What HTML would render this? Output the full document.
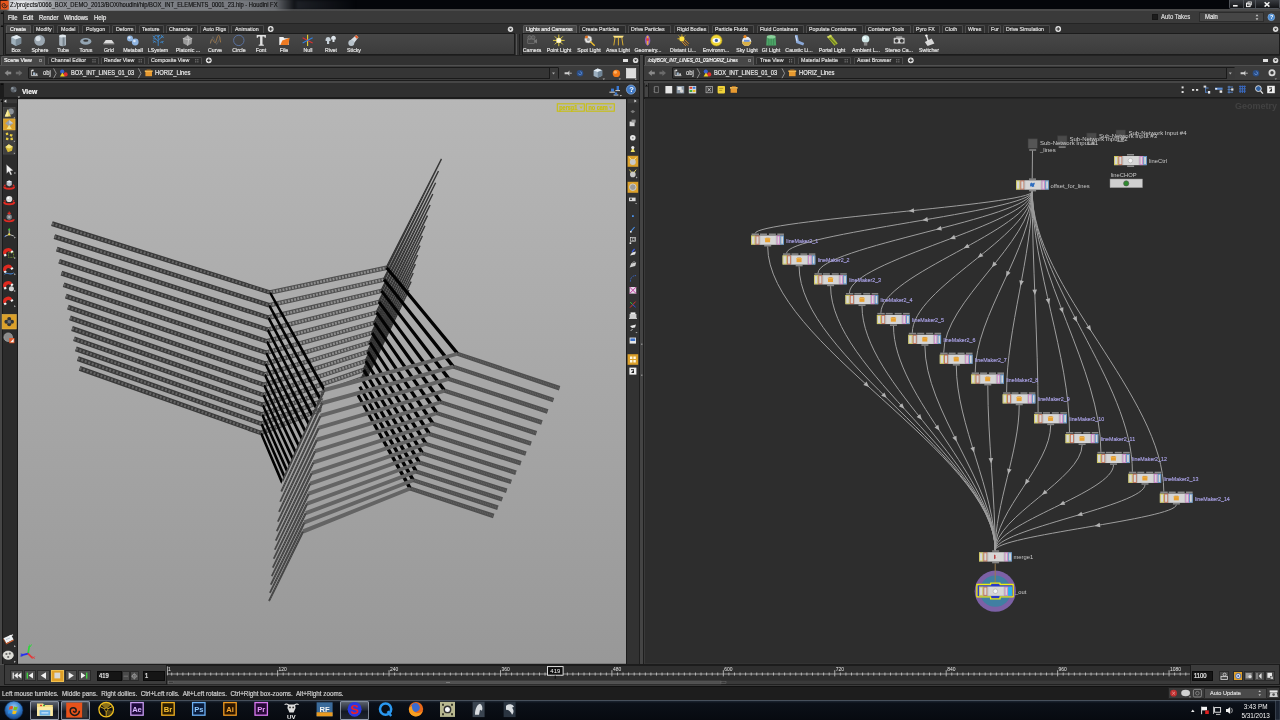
<!DOCTYPE html><html><head><meta charset="utf-8"><title>Houdini FX</title><style>

*{box-sizing:border-box}
html,body{margin:0;padding:0}
body{width:1280px;height:720px;overflow:hidden;background:#3a3a3a;font-family:"Liberation Sans",sans-serif;font-size:6.5px;color:#d0d0d0;position:relative}
.a{position:absolute}
.t{position:absolute;white-space:nowrap;line-height:1}
svg{position:absolute;left:0;top:0;overflow:visible}

</style></head><body><div id="root" style="position:absolute;left:0;top:0;width:1280px;height:720px;will-change:transform;">
<div class="a" style="left:0.0px;top:0.0px;width:1280.0px;height:9.6px;background:#04060a;"></div>
<div class="a" style="left:0.0px;top:9.4px;width:1280.0px;height:1.6px;background:#4a4a4a;"></div>
<div class="a" style="left:8.0px;top:-1.0px;width:290.0px;height:12.0px;background:linear-gradient(90deg,rgba(215,218,222,0.95) 0%,rgba(235,237,240,0.97) 5%,rgba(215,218,222,0.92) 11%,rgba(160,163,168,0.9) 17%,rgba(140,143,148,0.9) 40%,rgba(132,135,140,0.9) 80%,rgba(120,123,128,0.85) 92%,rgba(60,63,68,0.4) 98%,rgba(0,0,0,0) 100%);filter:blur(1.1px);"></div>
<div class="a" style="left:296.0px;top:0.0px;width:60.0px;height:10.0px;background:linear-gradient(90deg,rgba(60,64,72,0.45),rgba(0,0,0,0));filter:blur(1.5px);"></div>
<svg width="1280" height="720"><rect x="0.5" y="0.8" width="8.2" height="8.8" fill="#e8561c"/><path d="M4.6 5.2m-0.8 0a0.8 0.8 0 1 0 1.6 0a1.7 1.7 0 1 0 -3.4 0a2.6 2.6 0 1 0 5.2 0" fill="none" stroke="#1c1c1c" stroke-width="0.8"/></svg>
<div class="t" style="left:10.3px;top:2.01px;font-size:6.3px;color:#0c0c0c;transform:scaleX(0.922);transform-origin:0 0;-webkit-text-stroke:0.22px #0c0c0c;-webkit-text-stroke:0.12px #0c0c0c;">Z:/projects/0066_BOX_DEMO_2013/BOX/houdini/hip/BOX_INT_ELEMENTS_0001_23.hip - Houdini FX</div>
<div class="a" style="left:1229.0px;top:0.0px;width:51.0px;height:9.2px;background:linear-gradient(#3a3d42,#121316);border:0.6px solid #50545a;border-top:none;border-radius:0 0 2px 2px;"></div>
<div class="a" style="left:1242.6px;top:0.0px;width:0.6px;height:9.0px;background:#50545a;"></div><div class="a" style="left:1255.2px;top:0.0px;width:0.6px;height:9.0px;background:#50545a;"></div>
<svg width="1280" height="720"><rect x="1233" y="5" width="4.6" height="1.6" fill="#f0f0f0"/><rect x="1246.5" y="3.2" width="3.6" height="3.4" fill="none" stroke="#f0f0f0" stroke-width="1"/><rect x="1248" y="1.9" width="3.4" height="3" fill="none" stroke="#f0f0f0" stroke-width="0.7"/><path d="M1264.6 2.2L1269.4 6.6M1269.4 2.2L1264.6 6.6" stroke="#f4f4f4" stroke-width="1.5"/></svg>
<div class="a" style="left:0.0px;top:10.8px;width:1280.0px;height:12.8px;background:#3a3a3a;"></div>
<div class="t" style="left:7.6px;top:14.62px;font-size:6.9px;color:#ececec;transform:scaleX(0.860);transform-origin:0 0;-webkit-text-stroke:0.22px #ececec;">File</div>
<div class="t" style="left:23.0px;top:14.62px;font-size:6.9px;color:#ececec;transform:scaleX(0.860);transform-origin:0 0;-webkit-text-stroke:0.22px #ececec;">Edit</div>
<div class="t" style="left:38.8px;top:14.62px;font-size:6.9px;color:#ececec;transform:scaleX(0.860);transform-origin:0 0;-webkit-text-stroke:0.22px #ececec;">Render</div>
<div class="t" style="left:64.2px;top:14.62px;font-size:6.9px;color:#ececec;transform:scaleX(0.860);transform-origin:0 0;-webkit-text-stroke:0.22px #ececec;">Windows</div>
<div class="t" style="left:94.4px;top:14.62px;font-size:6.9px;color:#ececec;transform:scaleX(0.860);transform-origin:0 0;-webkit-text-stroke:0.22px #ececec;">Help</div>
<div class="a" style="left:1152.0px;top:14.2px;width:5.6px;height:5.6px;background:#1c1c1c;border:0.5px solid #161616;"></div>
<div class="t" style="left:1161.0px;top:14.17px;font-size:6.6px;color:#d8d8d8;transform:scaleX(0.900);transform-origin:0 0;-webkit-text-stroke:0.22px #d8d8d8;">Auto Takes</div>
<div class="a" style="left:1199.0px;top:12.2px;width:65.0px;height:10.0px;background:#464646;border:0.5px solid #2c2c2c;"></div>
<div class="t" style="left:1205.0px;top:13.97px;font-size:6.6px;color:#e0e0e0;transform:scaleX(0.900);transform-origin:0 0;-webkit-text-stroke:0.22px #e0e0e0;">Main</div>
<svg width="1280" height="720"><path d="M1255.6 16.2h2.8l-1.4-2zM1255.6 18.2h2.8l-1.4 2z" fill="#c8c8c8"/><circle cx="1271.3" cy="17.2" r="3.4" fill="#4a8ad0"/><circle cx="1271.3" cy="17.2" r="3.4" fill="none" stroke="#9cc4f0" stroke-width="0.5"/><text x="1270" y="19.3" font-size="5.5" font-weight="bold" fill="#fff" font-family="Liberation Sans">?</text></svg>
<div class="a" style="left:0.0px;top:23.4px;width:1280.0px;height:32.2px;background:#303030;border-top:1.4px solid #242424;"></div>
<div class="a" style="left:0.0px;top:10.6px;width:4.4px;height:88.0px;background:#3f3f3f;border-right:0.7px solid #1c1c1c;"></div>
<div class="a" style="left:0.0px;top:98.5px;width:2.4px;height:602.0px;background:#464646;"></div>
<div class="a" style="left:6.0px;top:25.0px;width:24.6px;height:8.8px;background:#474747;border:0.6px solid #5a5a5a;border-bottom:none;border-radius:1.5px 1.5px 0 0;"></div><div class="t" style="left:9.6px;top:26.86px;font-size:5.8px;color:#f4f4f4;transform:scaleX(0.920);transform-origin:0 0;-webkit-text-stroke:0.22px #f4f4f4;">Create</div><div class="a" style="left:32.6px;top:25.4px;width:21.8px;height:7.2px;background:#2d2d2d;border:0.6px solid #4c4c4c;border-bottom:none;border-radius:1.5px 1.5px 0 0;"></div><div class="t" style="left:36.2px;top:26.86px;font-size:5.8px;color:#dedede;transform:scaleX(0.920);transform-origin:0 0;-webkit-text-stroke:0.22px #dedede;">Modify</div><div class="a" style="left:57.4px;top:25.4px;width:22.0px;height:7.2px;background:#2d2d2d;border:0.6px solid #4c4c4c;border-bottom:none;border-radius:1.5px 1.5px 0 0;"></div><div class="t" style="left:61.0px;top:26.86px;font-size:5.8px;color:#dedede;transform:scaleX(0.920);transform-origin:0 0;-webkit-text-stroke:0.22px #dedede;">Model</div><div class="a" style="left:82.4px;top:25.4px;width:27.6px;height:7.2px;background:#2d2d2d;border:0.6px solid #4c4c4c;border-bottom:none;border-radius:1.5px 1.5px 0 0;"></div><div class="t" style="left:86.0px;top:26.86px;font-size:5.8px;color:#dedede;transform:scaleX(0.920);transform-origin:0 0;-webkit-text-stroke:0.22px #dedede;">Polygon</div><div class="a" style="left:112.0px;top:25.4px;width:24.2px;height:7.2px;background:#2d2d2d;border:0.6px solid #4c4c4c;border-bottom:none;border-radius:1.5px 1.5px 0 0;"></div><div class="t" style="left:115.6px;top:26.86px;font-size:5.8px;color:#dedede;transform:scaleX(0.920);transform-origin:0 0;-webkit-text-stroke:0.22px #dedede;">Deform</div><div class="a" style="left:138.6px;top:25.4px;width:25.0px;height:7.2px;background:#2d2d2d;border:0.6px solid #4c4c4c;border-bottom:none;border-radius:1.5px 1.5px 0 0;"></div><div class="t" style="left:142.2px;top:26.86px;font-size:5.8px;color:#dedede;transform:scaleX(0.920);transform-origin:0 0;-webkit-text-stroke:0.22px #dedede;">Texture</div><div class="a" style="left:165.6px;top:25.4px;width:32.0px;height:7.2px;background:#2d2d2d;border:0.6px solid #4c4c4c;border-bottom:none;border-radius:1.5px 1.5px 0 0;"></div><div class="t" style="left:169.2px;top:26.86px;font-size:5.8px;color:#dedede;transform:scaleX(0.920);transform-origin:0 0;-webkit-text-stroke:0.22px #dedede;">Character</div><div class="a" style="left:199.8px;top:25.4px;width:29.2px;height:7.2px;background:#2d2d2d;border:0.6px solid #4c4c4c;border-bottom:none;border-radius:1.5px 1.5px 0 0;"></div><div class="t" style="left:203.4px;top:26.86px;font-size:5.8px;color:#dedede;transform:scaleX(0.920);transform-origin:0 0;-webkit-text-stroke:0.22px #dedede;">Auto Rigs</div><div class="a" style="left:231.2px;top:25.4px;width:32.8px;height:7.2px;background:#2d2d2d;border:0.6px solid #4c4c4c;border-bottom:none;border-radius:1.5px 1.5px 0 0;"></div><div class="t" style="left:234.8px;top:26.86px;font-size:5.8px;color:#dedede;transform:scaleX(0.920);transform-origin:0 0;-webkit-text-stroke:0.22px #dedede;">Animation</div>
<svg width="1280" height="720"><circle cx="270.7" cy="29.0" r="2.9" fill="#e4e4e4"/><path d="M268.9 29.0h3.6M270.7 27.2v3.6" stroke="#2a2a2a" stroke-width="1"/></svg>
<svg width="1280" height="720"><circle cx="510.5" cy="29.2" r="2.7" fill="#d8d8d8"/><path d="M509.0 28.4h3l-1.5 2z" fill="#2a2a2a"/></svg>
<div class="a" style="left:522.6px;top:25.0px;width:54.4px;height:8.8px;background:#474747;border:0.6px solid #5a5a5a;border-bottom:none;border-radius:1.5px 1.5px 0 0;"></div><div class="t" style="left:525.8px;top:26.86px;font-size:5.8px;color:#f4f4f4;transform:scaleX(0.900);transform-origin:0 0;-webkit-text-stroke:0.22px #f4f4f4;">Lights and Cameras</div><div class="a" style="left:579.0px;top:25.4px;width:47.0px;height:7.2px;background:#2d2d2d;border:0.6px solid #4c4c4c;border-bottom:none;border-radius:1.5px 1.5px 0 0;"></div><div class="t" style="left:582.2px;top:26.86px;font-size:5.8px;color:#dedede;transform:scaleX(0.900);transform-origin:0 0;-webkit-text-stroke:0.22px #dedede;">Create Particles</div><div class="a" style="left:628.0px;top:25.4px;width:43.0px;height:7.2px;background:#2d2d2d;border:0.6px solid #4c4c4c;border-bottom:none;border-radius:1.5px 1.5px 0 0;"></div><div class="t" style="left:631.2px;top:26.86px;font-size:5.8px;color:#dedede;transform:scaleX(0.900);transform-origin:0 0;-webkit-text-stroke:0.22px #dedede;">Drive Particles</div><div class="a" style="left:673.6px;top:25.4px;width:35.0px;height:7.2px;background:#2d2d2d;border:0.6px solid #4c4c4c;border-bottom:none;border-radius:1.5px 1.5px 0 0;"></div><div class="t" style="left:676.8px;top:26.86px;font-size:5.8px;color:#dedede;transform:scaleX(0.900);transform-origin:0 0;-webkit-text-stroke:0.22px #dedede;">Rigid Bodies</div><div class="a" style="left:711.6px;top:25.4px;width:42.8px;height:7.2px;background:#2d2d2d;border:0.6px solid #4c4c4c;border-bottom:none;border-radius:1.5px 1.5px 0 0;"></div><div class="t" style="left:714.8px;top:26.86px;font-size:5.8px;color:#dedede;transform:scaleX(0.900);transform-origin:0 0;-webkit-text-stroke:0.22px #dedede;">Particle Fluids</div><div class="a" style="left:757.0px;top:25.4px;width:46.6px;height:7.2px;background:#2d2d2d;border:0.6px solid #4c4c4c;border-bottom:none;border-radius:1.5px 1.5px 0 0;"></div><div class="t" style="left:760.2px;top:26.86px;font-size:5.8px;color:#dedede;transform:scaleX(0.900);transform-origin:0 0;-webkit-text-stroke:0.22px #dedede;">Fluid Containers</div><div class="a" style="left:806.0px;top:25.4px;width:56.6px;height:7.2px;background:#2d2d2d;border:0.6px solid #4c4c4c;border-bottom:none;border-radius:1.5px 1.5px 0 0;"></div><div class="t" style="left:809.2px;top:26.86px;font-size:5.8px;color:#dedede;transform:scaleX(0.900);transform-origin:0 0;-webkit-text-stroke:0.22px #dedede;">Populate Containers</div><div class="a" style="left:865.0px;top:25.4px;width:45.6px;height:7.2px;background:#2d2d2d;border:0.6px solid #4c4c4c;border-bottom:none;border-radius:1.5px 1.5px 0 0;"></div><div class="t" style="left:868.2px;top:26.86px;font-size:5.8px;color:#dedede;transform:scaleX(0.900);transform-origin:0 0;-webkit-text-stroke:0.22px #dedede;">Container Tools</div><div class="a" style="left:913.0px;top:25.4px;width:26.6px;height:7.2px;background:#2d2d2d;border:0.6px solid #4c4c4c;border-bottom:none;border-radius:1.5px 1.5px 0 0;"></div><div class="t" style="left:916.2px;top:26.86px;font-size:5.8px;color:#dedede;transform:scaleX(0.900);transform-origin:0 0;-webkit-text-stroke:0.22px #dedede;">Pyro FX</div><div class="a" style="left:942.0px;top:25.4px;width:20.6px;height:7.2px;background:#2d2d2d;border:0.6px solid #4c4c4c;border-bottom:none;border-radius:1.5px 1.5px 0 0;"></div><div class="t" style="left:945.2px;top:26.86px;font-size:5.8px;color:#dedede;transform:scaleX(0.900);transform-origin:0 0;-webkit-text-stroke:0.22px #dedede;">Cloth</div><div class="a" style="left:965.0px;top:25.4px;width:19.6px;height:7.2px;background:#2d2d2d;border:0.6px solid #4c4c4c;border-bottom:none;border-radius:1.5px 1.5px 0 0;"></div><div class="t" style="left:968.2px;top:26.86px;font-size:5.8px;color:#dedede;transform:scaleX(0.900);transform-origin:0 0;-webkit-text-stroke:0.22px #dedede;">Wires</div><div class="a" style="left:987.6px;top:25.4px;width:13.0px;height:7.2px;background:#2d2d2d;border:0.6px solid #4c4c4c;border-bottom:none;border-radius:1.5px 1.5px 0 0;"></div><div class="t" style="left:990.8px;top:26.86px;font-size:5.8px;color:#dedede;transform:scaleX(0.900);transform-origin:0 0;-webkit-text-stroke:0.22px #dedede;">Fur</div><div class="a" style="left:1003.0px;top:25.4px;width:47.4px;height:7.2px;background:#2d2d2d;border:0.6px solid #4c4c4c;border-bottom:none;border-radius:1.5px 1.5px 0 0;"></div><div class="t" style="left:1006.2px;top:26.86px;font-size:5.8px;color:#dedede;transform:scaleX(0.900);transform-origin:0 0;-webkit-text-stroke:0.22px #dedede;">Drive Simulation</div>
<svg width="1280" height="720"><circle cx="1058.2" cy="29.0" r="2.9" fill="#e4e4e4"/><path d="M1056.4 29.0h3.6M1058.2 27.2v3.6" stroke="#2a2a2a" stroke-width="1"/></svg>
<svg width="1280" height="720"><circle cx="1275.6" cy="29.2" r="2.7" fill="#d8d8d8"/><path d="M1274.1 28.4h3l-1.5 2z" fill="#2a2a2a"/></svg>
<div class="a" style="left:5.0px;top:33.0px;width:509.6px;height:22.0px;background:linear-gradient(#474747,#3c3c3c);border:0.5px solid #1c1c1c;"></div>
<div class="a" style="left:521.6px;top:33.0px;width:758.4px;height:22.0px;background:linear-gradient(#474747,#3c3c3c);border:0.5px solid #1c1c1c;"></div>
<div class="a" style="left:515.6px;top:33.6px;width:4.6px;height:21.0px;background:#333;border-left:0.6px solid #555;border-right:0.6px solid #1e1e1e;"></div>
<svg width="1280" height="720">
<g transform="translate(16.2 40.4)"><path d="M-5 -3.5L0.5 -5.5L5 -3L5 3L-0.5 5.5L-5 3Z" fill="#9fb0bb"/><path d="M-5 -3.5L-0.5 -1L5 -3L0.5 -5.5Z" fill="#dfe8ee"/><path d="M-0.5 -1V5.5L5 3V-3Z" fill="#7a8a96"/></g>
<g transform="translate(39.6 40.4)"><circle r="5.4" fill="#9aa6b0"/><circle cx="-1.5" cy="-1.8" r="2.6" fill="#d6dee4"/></g>
<g transform="translate(62.6 40.4)"><path d="M-3.4 -4.5V4.2A3.4 1.6 0 0 0 3.4 4.2V-4.5Z" fill="#a9b5be"/><ellipse cy="-4.5" rx="3.4" ry="1.5" fill="#dde5ea"/><path d="M1 -3V5.6" stroke="#7b8790" stroke-width="2"/></g>
<g transform="translate(85.8 40.4)"><ellipse cy="1" rx="5.6" ry="3.3" fill="#93a4b2"/><ellipse cy="0.3" rx="2.6" ry="1.1" fill="#3a3a3a"/></g>
<g transform="translate(108.8 40.4)"><path d="M-5.5 3L-3 -0.5H3L5.5 3Z" fill="#dcdcdc"/><path d="M-5.5 3h11v1h-11z" fill="#999"/></g>
<g transform="translate(132.6 40.4)"><circle cx="-2.6" cy="-2" r="3" fill="#8fb4e0"/><circle cx="2.6" cy="1.6" r="3.4" fill="#8fb4e0"/><circle cx="-3.3" cy="-2.8" r="1.2" fill="#dce9f8"/><circle cx="1.8" cy="0.6" r="1.3" fill="#dce9f8"/></g>
<g transform="translate(158.2 40.4)"><path d="M0 5.5V-1M0 1L-4 -3M0 0L4 -4M0 -1V-5.5M-4 -3L-5.4 -4.6M-4 -3L-2.6 -5.2M4 -4L5.4 -2.4M4 -4L3 -5.6M-2 2L-5.4 0.2M2 2L5.4 1M-2.4 -1.4L-5 -1.6M2.6 -2.6L5.2 -4.6M0 -3.4L-1.8 -5.4M0 -3.4L1.6 -5.4M-3.6 1L-4.8 2.4M3.6 1.4L4.8 3" stroke="#3f8fd8" stroke-width="0.85" fill="none"/></g>
<g transform="translate(187.6 40.4)"><path d="M0 -5.2L4.6 -2.2L4 3.4L0 5.4L-4.2 3.2L-4.8 -2Z" fill="#9a9a9a"/><path d="M0 -5.2L1 -0.5L4.6 -2.2M1 -0.5L0 5.4M1 -0.5L-4.8 -2" stroke="#d8d8d8" stroke-width="0.6" fill="none"/></g>
<g transform="translate(215.4 40.4)"><path d="M-5 3C-3 -8 -1 8 1 0S4 -6 5.2 2" stroke="#a07848" stroke-width="1" fill="none"/><path d="M-5 3L-2.4 -3.8L1.2 4L5.2 -3" stroke="#777" stroke-width="0.5" fill="none"/></g>
<g transform="translate(238.8 40.4)"><circle r="5.2" fill="none" stroke="#5a72a0" stroke-width="1"/></g>
<g transform="translate(261.3 40.4)"><path d="M-4.6 -5.4H4.6V-2.6H3.4L3 -4H1.2V4L2.6 4.4V5.4H-2.6V4.4L-1.2 4V-4H-3L-3.4 -2.6H-4.6Z" fill="#e2e2e2"/></g>
<g transform="translate(284.3 40.4)"><path d="M-5 -3.5H-1L0 -2.2H4.4V4.5H-5Z" fill="#f2f2f2"/><path d="M-2 0L5.4 -2.6L4 4.5H-4Z" fill="#ee7a22"/></g>
<g transform="translate(307.6 40.4)"><path d="M0 -5.6V5.6" stroke="#e8d030" stroke-width="1.1"/><path d="M-5 -2.6L5 2.6" stroke="#e03030" stroke-width="1.1"/><path d="M-5 2.6L5 -2.6" stroke="#3080e0" stroke-width="1.1"/></g>
<g transform="translate(330.6 40.4)"><path d="M-5 -1.5A2.6 2.6 0 0 1 0 -1.5V0.5H-1.4V3.6H-3.6V0.5H-5Z" fill="#c6d0d8"/><path d="M0.6 -3A2.4 2.4 0 0 1 5.2 -3V-1H3.9V1.6H1.9V-1H0.6Z" fill="#dfe6ec"/></g>
<g transform="translate(353.7 40.4)"><path d="M-4.8 1L2.6 -5.4L4.8 -3.2L-1.2 4.6Z" fill="#d6dce2"/><circle cx="-2.4" cy="2.6" r="3" fill="#b8c2ca"/><path d="M2.6 -5.4L4.8 -3.2L3 -1.6L1 -3.8Z" fill="#e06030"/></g>
<g transform="translate(532.0 40.4)"><rect x="-4.2" y="-1.4" width="6.6" height="4.4" fill="#4a4a4a" stroke="#888" stroke-width="0.5"/><circle cx="-2.4" cy="-3" r="1.8" fill="#555" stroke="#8a8a8a" stroke-width="0.5"/><circle cx="1.2" cy="-3" r="1.8" fill="#555" stroke="#8a8a8a" stroke-width="0.5"/><path d="M2.4 0.2L5 -1.4V3L2.4 1.6Z" fill="#777"/></g>
<g transform="translate(558.8 40.4)"><circle r="2.6" fill="#fff6b0"/><path d="M0 -5.8V5.8M-5.8 0H5.8M-4 -4L4 4M-4 4L4 -4" stroke="#f0d840" stroke-width="0.9"/><circle r="2.2" fill="#fffbe0"/></g>
<g transform="translate(589.3 40.4)"><circle cx="-1" cy="-1" r="3.6" fill="#e6e6e6" stroke="#888" stroke-width="0.6"/><path d="M1 1L5.4 5.4" stroke="#f0c030" stroke-width="1.4"/><circle cx="-2.8" cy="-3.4" r="1.5" fill="#e07020"/><circle cx="-1" cy="-1" r="1.6" fill="#9a9a9a"/></g>
<g transform="translate(618.4 40.4)"><path d="M-5.4 -4.6H5.4L4.2 -2.6H-4.2Z" fill="#ffe680"/><path d="M-3.4 -2.6L-4.6 5M0 -2.6V5M3.4 -2.6L4.6 5" stroke="#e8b830" stroke-width="0.9"/></g>
<g transform="translate(647.6 40.4)"><path d="M0 -5.6C3.6 -3 3.6 3 0 5.6C-3.6 3 -3.6 -3 0 -5.6Z" fill="#8a5ac0"/><path d="M0 -4.4V4.4" stroke="#f0b030" stroke-width="1.6"/><circle cx="0" cy="-1" r="1.5" fill="#e04040"/></g>
<g transform="translate(683.3 40.4)"><circle cx="-1.4" cy="-1.6" r="2.6" fill="#ffe040"/><path d="M-1.4 -6V-4.6M-5.8 -1.6H-4.4M-4.6 -4.8L-3.6 -3.8M1.8 -4.8L0.8 -3.8" stroke="#f0c020" stroke-width="0.9"/><path d="M0 0.6L4.6 5.2M1.6 -0.6L5.6 3.4M-1.4 1.4L2.6 5.6" stroke="#e09020" stroke-width="0.9"/></g>
<g transform="translate(716.4 40.4)"><circle r="5.6" fill="#f0d838"/><circle r="5.6" fill="none" stroke="#b89a18" stroke-width="0.6"/><ellipse rx="3.8" ry="2.3" fill="#fafafa"/><circle r="1.6" fill="#3a62b0"/></g>
<g transform="translate(746.6 40.4)"><circle cy="1" r="4.6" fill="#e8ecf2"/><path d="M-4.6 1A4.6 4.6 0 0 0 4.6 1Z" fill="#d8b048"/><circle cx="-1.6" cy="-3.8" r="1.6" fill="#f08a20"/><path d="M-2.6 -0.6H3V1.4H-2.6Z" fill="#6a90d8"/></g>
<g transform="translate(771.2 40.4)"><path d="M-4.4 -3.6L-5 5H5L4.4 -3.6Z" fill="#4ea468"/><path d="M-2.4 -2v7.2M0 -2v7.4M2.4 -2v7.2" stroke="#3a8852" stroke-width="0.8"/><ellipse cy="-3.6" rx="4.4" ry="1.8" fill="#8ad09a"/></g>
<g transform="translate(799.2 40.4)"><path d="M-4.2 -5.4L-1.6 -5.4L-0.4 0.4L5 2.6L4 5L-3 2.6Z" fill="#8aa8d8"/><path d="M-3.6 -4.6L-2.2 0.8" stroke="#e4ecf8" stroke-width="0.9"/></g>
<g transform="translate(832.4 40.4)"><path d="M-5.4 -3.6L-1.6 -5.6L5.4 3L2 5.4Z" fill="#a4b434"/><path d="M-3.6 -3.2L3.6 4.2" stroke="#66781c" stroke-width="1.2"/><path d="M-5.4 -3.6L-1.6 -5.6L-0.4 -4.2L-4.2 -2.2Z" fill="#d4d860"/></g>
<g transform="translate(865.6 40.4)"><circle cy="-1.4" r="3.8" fill="#cfe6e6"/><path d="M-1.7 2H1.7V5.2H-1.7Z" fill="#8a8a8a"/><circle cx="-1" cy="-2.4" r="1.4" fill="#f4ffff"/></g>
<g transform="translate(899.2 40.4)"><rect x="-5.6" y="-2.6" width="11.2" height="6" rx="0.8" fill="#d8d8d8" stroke="#555" stroke-width="0.5"/><circle cx="-2.6" cy="0.4" r="1.9" fill="#3a3a3a"/><circle cx="2.6" cy="0.4" r="1.9" fill="#3a3a3a"/><path d="M-3 -4H3V-2.6H-3Z" fill="#aaa"/></g>
<g transform="translate(929.4 40.4)"><path d="M-4.6 1.6L2.2 -1.8L5 3L-1.8 5.6Z" fill="#d8d8d8"/><path d="M-1 1.4L-3 -4.8" stroke="#e8e8e8" stroke-width="1.4"/><circle cx="-3" cy="-4.8" r="1.2" fill="#f4f4f4"/></g>
</svg>
<div class="t" style="left:16.2px;top:47.56px;width:50px;margin-left:-25px;text-align:center;font-size:5.8px;color:#e2e2e2;transform:scaleX(0.9);-webkit-text-stroke:0.22px #e2e2e2;">Box</div>
<div class="t" style="left:39.6px;top:47.56px;width:50px;margin-left:-25px;text-align:center;font-size:5.8px;color:#e2e2e2;transform:scaleX(0.9);-webkit-text-stroke:0.22px #e2e2e2;">Sphere</div>
<div class="t" style="left:62.6px;top:47.56px;width:50px;margin-left:-25px;text-align:center;font-size:5.8px;color:#e2e2e2;transform:scaleX(0.9);-webkit-text-stroke:0.22px #e2e2e2;">Tube</div>
<div class="t" style="left:85.8px;top:47.56px;width:50px;margin-left:-25px;text-align:center;font-size:5.8px;color:#e2e2e2;transform:scaleX(0.9);-webkit-text-stroke:0.22px #e2e2e2;">Torus</div>
<div class="t" style="left:108.8px;top:47.56px;width:50px;margin-left:-25px;text-align:center;font-size:5.8px;color:#e2e2e2;transform:scaleX(0.9);-webkit-text-stroke:0.22px #e2e2e2;">Grid</div>
<div class="t" style="left:132.6px;top:47.56px;width:50px;margin-left:-25px;text-align:center;font-size:5.8px;color:#e2e2e2;transform:scaleX(0.9);-webkit-text-stroke:0.22px #e2e2e2;">Metaball</div>
<div class="t" style="left:158.2px;top:47.56px;width:50px;margin-left:-25px;text-align:center;font-size:5.8px;color:#e2e2e2;transform:scaleX(0.9);-webkit-text-stroke:0.22px #e2e2e2;">LSystem</div>
<div class="t" style="left:187.6px;top:47.56px;width:50px;margin-left:-25px;text-align:center;font-size:5.8px;color:#e2e2e2;transform:scaleX(0.9);-webkit-text-stroke:0.22px #e2e2e2;">Platonic ...</div>
<div class="t" style="left:215.4px;top:47.56px;width:50px;margin-left:-25px;text-align:center;font-size:5.8px;color:#e2e2e2;transform:scaleX(0.9);-webkit-text-stroke:0.22px #e2e2e2;">Curve</div>
<div class="t" style="left:238.8px;top:47.56px;width:50px;margin-left:-25px;text-align:center;font-size:5.8px;color:#e2e2e2;transform:scaleX(0.9);-webkit-text-stroke:0.22px #e2e2e2;">Circle</div>
<div class="t" style="left:261.3px;top:47.56px;width:50px;margin-left:-25px;text-align:center;font-size:5.8px;color:#e2e2e2;transform:scaleX(0.9);-webkit-text-stroke:0.22px #e2e2e2;">Font</div>
<div class="t" style="left:284.3px;top:47.56px;width:50px;margin-left:-25px;text-align:center;font-size:5.8px;color:#e2e2e2;transform:scaleX(0.9);-webkit-text-stroke:0.22px #e2e2e2;">File</div>
<div class="t" style="left:307.6px;top:47.56px;width:50px;margin-left:-25px;text-align:center;font-size:5.8px;color:#e2e2e2;transform:scaleX(0.9);-webkit-text-stroke:0.22px #e2e2e2;">Null</div>
<div class="t" style="left:330.6px;top:47.56px;width:50px;margin-left:-25px;text-align:center;font-size:5.8px;color:#e2e2e2;transform:scaleX(0.9);-webkit-text-stroke:0.22px #e2e2e2;">Rivet</div>
<div class="t" style="left:353.7px;top:47.56px;width:50px;margin-left:-25px;text-align:center;font-size:5.8px;color:#e2e2e2;transform:scaleX(0.9);-webkit-text-stroke:0.22px #e2e2e2;">Sticky</div>
<div class="t" style="left:532.0px;top:47.56px;width:50px;margin-left:-25px;text-align:center;font-size:5.8px;color:#e2e2e2;transform:scaleX(0.9);-webkit-text-stroke:0.22px #e2e2e2;">Camera</div>
<div class="t" style="left:558.8px;top:47.56px;width:50px;margin-left:-25px;text-align:center;font-size:5.8px;color:#e2e2e2;transform:scaleX(0.9);-webkit-text-stroke:0.22px #e2e2e2;">Point Light</div>
<div class="t" style="left:589.3px;top:47.56px;width:50px;margin-left:-25px;text-align:center;font-size:5.8px;color:#e2e2e2;transform:scaleX(0.9);-webkit-text-stroke:0.22px #e2e2e2;">Spot Light</div>
<div class="t" style="left:618.4px;top:47.56px;width:50px;margin-left:-25px;text-align:center;font-size:5.8px;color:#e2e2e2;transform:scaleX(0.9);-webkit-text-stroke:0.22px #e2e2e2;">Area Light</div>
<div class="t" style="left:647.6px;top:47.56px;width:50px;margin-left:-25px;text-align:center;font-size:5.8px;color:#e2e2e2;transform:scaleX(0.9);-webkit-text-stroke:0.22px #e2e2e2;">Geometry...</div>
<div class="t" style="left:683.3px;top:47.56px;width:50px;margin-left:-25px;text-align:center;font-size:5.8px;color:#e2e2e2;transform:scaleX(0.9);-webkit-text-stroke:0.22px #e2e2e2;">Distant Li...</div>
<div class="t" style="left:716.4px;top:47.56px;width:50px;margin-left:-25px;text-align:center;font-size:5.8px;color:#e2e2e2;transform:scaleX(0.9);-webkit-text-stroke:0.22px #e2e2e2;">Environm...</div>
<div class="t" style="left:746.6px;top:47.56px;width:50px;margin-left:-25px;text-align:center;font-size:5.8px;color:#e2e2e2;transform:scaleX(0.9);-webkit-text-stroke:0.22px #e2e2e2;">Sky Light</div>
<div class="t" style="left:771.2px;top:47.56px;width:50px;margin-left:-25px;text-align:center;font-size:5.8px;color:#e2e2e2;transform:scaleX(0.9);-webkit-text-stroke:0.22px #e2e2e2;">GI Light</div>
<div class="t" style="left:799.2px;top:47.56px;width:50px;margin-left:-25px;text-align:center;font-size:5.8px;color:#e2e2e2;transform:scaleX(0.9);-webkit-text-stroke:0.22px #e2e2e2;">Caustic Li...</div>
<div class="t" style="left:832.4px;top:47.56px;width:50px;margin-left:-25px;text-align:center;font-size:5.8px;color:#e2e2e2;transform:scaleX(0.9);-webkit-text-stroke:0.22px #e2e2e2;">Portal Light</div>
<div class="t" style="left:865.6px;top:47.56px;width:50px;margin-left:-25px;text-align:center;font-size:5.8px;color:#e2e2e2;transform:scaleX(0.9);-webkit-text-stroke:0.22px #e2e2e2;">Ambient L...</div>
<div class="t" style="left:899.2px;top:47.56px;width:50px;margin-left:-25px;text-align:center;font-size:5.8px;color:#e2e2e2;transform:scaleX(0.9);-webkit-text-stroke:0.22px #e2e2e2;">Stereo Ca...</div>
<div class="t" style="left:929.4px;top:47.56px;width:50px;margin-left:-25px;text-align:center;font-size:5.8px;color:#e2e2e2;transform:scaleX(0.9);-webkit-text-stroke:0.22px #e2e2e2;">Switcher</div>
<div class="a" style="left:0.0px;top:55.4px;width:1280.0px;height:9.6px;background:#313131;border-top:1px solid #222;"></div>
<div class="a" style="left:1.0px;top:56.2px;width:44.4px;height:9.4px;background:#474747;border:0.6px solid #5a5a5a;border-bottom:none;border-radius:1.5px 1.5px 0 0;"></div><div class="t" style="left:4.4px;top:57.51px;font-size:5.9px;color:#f4f4f4;transform:scaleX(0.900);transform-origin:0 0;-webkit-text-stroke:0.22px #f4f4f4;">Scene View</div><div class="a" style="left:39.0px;top:59.1px;width:3.4px;height:3.2px;border:0.6px solid #8a8a8a;"></div><div class="a" style="left:47.6px;top:56.6px;width:51.2px;height:7.8px;background:#2d2d2d;border:0.6px solid #4c4c4c;border-bottom:none;border-radius:1.5px 1.5px 0 0;"></div><div class="t" style="left:51.0px;top:57.51px;font-size:5.9px;color:#dedede;transform:scaleX(0.900);transform-origin:0 0;-webkit-text-stroke:0.22px #dedede;">Channel Editor</div><svg width="1280" height="720"><g fill="#8a8a8a"><rect x="92.4" y="59.2" width="1.1" height="1.1"/><rect x="94.5" y="59.2" width="1.1" height="1.1"/><rect x="92.4" y="61.3" width="1.1" height="1.1"/><rect x="94.5" y="61.3" width="1.1" height="1.1"/></g></svg><div class="a" style="left:101.0px;top:56.6px;width:44.0px;height:7.8px;background:#2d2d2d;border:0.6px solid #4c4c4c;border-bottom:none;border-radius:1.5px 1.5px 0 0;"></div><div class="t" style="left:104.4px;top:57.51px;font-size:5.9px;color:#dedede;transform:scaleX(0.900);transform-origin:0 0;-webkit-text-stroke:0.22px #dedede;">Render View</div><svg width="1280" height="720"><g fill="#8a8a8a"><rect x="138.6" y="59.2" width="1.1" height="1.1"/><rect x="140.7" y="59.2" width="1.1" height="1.1"/><rect x="138.6" y="61.3" width="1.1" height="1.1"/><rect x="140.7" y="61.3" width="1.1" height="1.1"/></g></svg><div class="a" style="left:147.6px;top:56.6px;width:54.0px;height:7.8px;background:#2d2d2d;border:0.6px solid #4c4c4c;border-bottom:none;border-radius:1.5px 1.5px 0 0;"></div><div class="t" style="left:151.0px;top:57.51px;font-size:5.9px;color:#dedede;transform:scaleX(0.900);transform-origin:0 0;-webkit-text-stroke:0.22px #dedede;">Composite View</div><svg width="1280" height="720"><g fill="#8a8a8a"><rect x="195.2" y="59.2" width="1.1" height="1.1"/><rect x="197.3" y="59.2" width="1.1" height="1.1"/><rect x="195.2" y="61.3" width="1.1" height="1.1"/><rect x="197.3" y="61.3" width="1.1" height="1.1"/></g></svg>
<svg width="1280" height="720"><circle cx="208.8" cy="60.3" r="2.9" fill="#e4e4e4"/><path d="M207.0 60.3h3.6M208.8 58.5v3.6" stroke="#2a2a2a" stroke-width="1"/></svg>
<div class="a" style="left:645.0px;top:56.2px;width:109.0px;height:9.4px;background:#474747;border:0.6px solid #5a5a5a;border-bottom:none;border-radius:1.5px 1.5px 0 0;"></div><div class="t" style="left:648.4px;top:57.51px;font-size:5.9px;color:#f4f4f4;transform:scaleX(0.790);transform-origin:0 0;-webkit-text-stroke:0.22px #f4f4f4;font-style:italic;">/obj/BOX_INT_LINES_01_03/HORIZ_Lines</div><div class="a" style="left:747.6px;top:59.1px;width:3.4px;height:3.2px;border:0.6px solid #8a8a8a;"></div><div class="a" style="left:756.4px;top:56.6px;width:39.0px;height:7.8px;background:#2d2d2d;border:0.6px solid #4c4c4c;border-bottom:none;border-radius:1.5px 1.5px 0 0;"></div><div class="t" style="left:759.8px;top:57.51px;font-size:5.9px;color:#dedede;transform:scaleX(0.900);transform-origin:0 0;-webkit-text-stroke:0.22px #dedede;">Tree View</div><svg width="1280" height="720"><g fill="#8a8a8a"><rect x="789.0" y="59.2" width="1.1" height="1.1"/><rect x="791.1" y="59.2" width="1.1" height="1.1"/><rect x="789.0" y="61.3" width="1.1" height="1.1"/><rect x="791.1" y="61.3" width="1.1" height="1.1"/></g></svg><div class="a" style="left:797.6px;top:56.6px;width:53.4px;height:7.8px;background:#2d2d2d;border:0.6px solid #4c4c4c;border-bottom:none;border-radius:1.5px 1.5px 0 0;"></div><div class="t" style="left:801.0px;top:57.51px;font-size:5.9px;color:#dedede;transform:scaleX(0.900);transform-origin:0 0;-webkit-text-stroke:0.22px #dedede;">Material Palette</div><svg width="1280" height="720"><g fill="#8a8a8a"><rect x="844.6" y="59.2" width="1.1" height="1.1"/><rect x="846.7" y="59.2" width="1.1" height="1.1"/><rect x="844.6" y="61.3" width="1.1" height="1.1"/><rect x="846.7" y="61.3" width="1.1" height="1.1"/></g></svg><div class="a" style="left:853.6px;top:56.6px;width:49.0px;height:7.8px;background:#2d2d2d;border:0.6px solid #4c4c4c;border-bottom:none;border-radius:1.5px 1.5px 0 0;"></div><div class="t" style="left:857.0px;top:57.51px;font-size:5.9px;color:#dedede;transform:scaleX(0.900);transform-origin:0 0;-webkit-text-stroke:0.22px #dedede;">Asset Browser</div><svg width="1280" height="720"><g fill="#8a8a8a"><rect x="896.2" y="59.2" width="1.1" height="1.1"/><rect x="898.3" y="59.2" width="1.1" height="1.1"/><rect x="896.2" y="61.3" width="1.1" height="1.1"/><rect x="898.3" y="61.3" width="1.1" height="1.1"/></g></svg>
<svg width="1280" height="720"><circle cx="910.8" cy="60.3" r="2.9" fill="#e4e4e4"/><path d="M909.0 60.3h3.6M910.8 58.5v3.6" stroke="#2a2a2a" stroke-width="1"/></svg>
<div class="a" style="left:623.0px;top:58.6px;width:5.0px;height:3.6px;background:#e0e0e0;"></div>
<svg width="1280" height="720"><circle cx="635.6" cy="60.4" r="2.7" fill="#d8d8d8"/><path d="M634.1 59.6h3l-1.5 2z" fill="#2a2a2a"/></svg>
<div class="a" style="left:1263.0px;top:58.6px;width:5.0px;height:3.6px;background:#e0e0e0;"></div>
<svg width="1280" height="720"><circle cx="1275.6" cy="60.4" r="2.7" fill="#d8d8d8"/><path d="M1274.1 59.6h3l-1.5 2z" fill="#2a2a2a"/></svg>
<div class="a" style="left:0.0px;top:65.0px;width:1280.0px;height:16.4px;background:#3c3c3c;border-top:0.6px solid #505050;"></div>
<div class="a" style="left:28.0px;top:67.4px;width:530.6px;height:11.8px;background:#353535;border:0.6px solid #1a1a1a;border-radius:1px;"></div>
<div class="a" style="left:549.0px;top:68.0px;width:9.0px;height:10.6px;background:#3a3a3a;border-left:0.6px solid #1a1a1a;"></div>
<svg width="1280" height="720"><path d="M552.0 72.4h3l-1.5 2.2z" fill="#a8a8a8"/></svg>
<div class="a" style="left:672.0px;top:67.4px;width:563.4px;height:11.8px;background:#353535;border:0.6px solid #1a1a1a;border-radius:1px;"></div>
<div class="a" style="left:1225.8px;top:68.0px;width:9.0px;height:10.6px;background:#3a3a3a;border-left:0.6px solid #1a1a1a;"></div>
<svg width="1280" height="720"><path d="M1228.8 72.4h3l-1.5 2.2z" fill="#a8a8a8"/></svg>
<svg width="1280" height="720"><g transform="translate(0.0 0)"><path d="M4.6 73l3.6-3v1.8h3v2.4h-3V76z" fill="#8a8a8a"/><path d="M22.4 73l-3.6-3v1.8h-3v2.4h3V76z" fill="#6a6a6a"/><path d="M31.4 70v5.6h6.4" stroke="#cfcfcf" stroke-width="0.9" fill="none"/><rect x="33" y="72.4" width="2.2" height="2.6" fill="#9fb4c8"/><rect x="35.6" y="73.4" width="1.8" height="1.6" fill="#c8c8c8"/><rect x="31.8" y="69.6" width="1.8" height="1.6" fill="#e0e0e0"/><path d="M53.6 68.4l2.6 4.9-2.6 4.9M138.4 68.4l2.6 4.9-2.6 4.9" stroke="#9a9a9a" stroke-width="0.9" fill="none"/><circle cx="62.2" cy="71.6" r="2.1" fill="#3a62d0"/><circle cx="65.6" cy="74.4" r="2.1" fill="#e03030"/><path d="M60 76.4l2.4-4 2.4 4z" fill="#f0d020"/><path d="M145.4 71.6h6.6v4.6h-6.6z" fill="#e89a30"/><path d="M144.8 70.4h7.8v1.6h-7.8z" fill="#f4b850"/><path d="M146.6 69.6h4.2v1h-4.2z" fill="#c88020"/></g></svg><div class="t" style="left:42.6px;top:69.67px;font-size:6.8px;color:#dcdcdc;transform:scaleX(0.860);transform-origin:0 0;-webkit-text-stroke:0.22px #dcdcdc;">obj</div><div class="t" style="left:70.8px;top:69.67px;font-size:6.8px;color:#e6e6e6;transform:scaleX(0.840);transform-origin:0 0;-webkit-text-stroke:0.22px #e6e6e6;">BOX_INT_LINES_01_03</div><div class="t" style="left:155.0px;top:69.67px;font-size:6.8px;color:#e6e6e6;transform:scaleX(0.860);transform-origin:0 0;-webkit-text-stroke:0.22px #e6e6e6;">HORIZ_Lines</div>
<svg width="1280" height="720"><g transform="translate(643.6 0)"><path d="M4.6 73l3.6-3v1.8h3v2.4h-3V76z" fill="#8a8a8a"/><path d="M22.4 73l-3.6-3v1.8h-3v2.4h3V76z" fill="#6a6a6a"/><path d="M31.4 70v5.6h6.4" stroke="#cfcfcf" stroke-width="0.9" fill="none"/><rect x="33" y="72.4" width="2.2" height="2.6" fill="#9fb4c8"/><rect x="35.6" y="73.4" width="1.8" height="1.6" fill="#c8c8c8"/><rect x="31.8" y="69.6" width="1.8" height="1.6" fill="#e0e0e0"/><path d="M53.6 68.4l2.6 4.9-2.6 4.9M138.4 68.4l2.6 4.9-2.6 4.9" stroke="#9a9a9a" stroke-width="0.9" fill="none"/><circle cx="62.2" cy="71.6" r="2.1" fill="#3a62d0"/><circle cx="65.6" cy="74.4" r="2.1" fill="#e03030"/><path d="M60 76.4l2.4-4 2.4 4z" fill="#f0d020"/><path d="M145.4 71.6h6.6v4.6h-6.6z" fill="#e89a30"/><path d="M144.8 70.4h7.8v1.6h-7.8z" fill="#f4b850"/><path d="M146.6 69.6h4.2v1h-4.2z" fill="#c88020"/></g></svg><div class="t" style="left:686.2px;top:69.67px;font-size:6.8px;color:#dcdcdc;transform:scaleX(0.860);transform-origin:0 0;-webkit-text-stroke:0.22px #dcdcdc;">obj</div><div class="t" style="left:714.4px;top:69.67px;font-size:6.8px;color:#e6e6e6;transform:scaleX(0.840);transform-origin:0 0;-webkit-text-stroke:0.22px #e6e6e6;">BOX_INT_LINES_01_03</div><div class="t" style="left:798.6px;top:69.67px;font-size:6.8px;color:#e6e6e6;transform:scaleX(0.860);transform-origin:0 0;-webkit-text-stroke:0.22px #e6e6e6;">HORIZ_Lines</div>
<svg width="1280" height="720">
<g transform="translate(0 0)"><path d="M564.6 72.2h3.4l1.4-1.8v5.6l-1.4-1.8h-3.4z" fill="#d0d0d0"/><path d="M569.4 73.2h2.4" stroke="#d0d0d0" stroke-width="0.8"/><circle cx="580" cy="73.2" r="3.3" fill="#2c4f86"/><path d="M578.6 73.2a1.5 1.5 0 1 0 1.5-1.5" stroke="#6a9ae0" stroke-width="0.7" fill="none"/></g>
<g transform="translate(676 0)"><path d="M564.6 72.2h3.4l1.4-1.8v5.6l-1.4-1.8h-3.4z" fill="#d0d0d0"/><path d="M569.4 73.2h2.4" stroke="#d0d0d0" stroke-width="0.8"/><circle cx="580" cy="73.2" r="3.3" fill="#2c4f86"/><path d="M578.6 73.2a1.5 1.5 0 1 0 1.5-1.5" stroke="#6a9ae0" stroke-width="0.7" fill="none"/></g>
<path d="M593.6 70.4l4-1.8 4.6 1.6v5.6l-4.4 2-4.2-1.8z" fill="#9db0c0"/><path d="M593.6 70.4l4.2 1.6 4.4-1.8-4.6-1.6z" fill="#e4edf4"/><path d="M597.8 72v5.8l4.4-2v-5.6z" fill="#6f8496"/><path d="M602.6 78.6h2.4l-1.2 1.4z" fill="#aaa"/>
<circle cx="616.4" cy="73.4" r="3.7" fill="#f07818"/><circle cx="615.4" cy="72.2" r="1.6" fill="#ffb060"/><path d="M618.6 78.6h2.4l-1.2 1.4z" fill="#aaa"/>
<rect x="626.4" y="68.6" width="9.4" height="9.4" fill="#dcdcdc" stroke="#f4f4f4" stroke-width="0.6"/><path d="M634.6 78.8h2.4l-1.2 1.4z" fill="#aaa"/>
<circle cx="1272" cy="72.8" r="2.6" fill="none" stroke="#d8d8d8" stroke-width="1.8"/><path d="M1274.6 78.4h2.4l-1.2 1.4z" fill="#aaa"/>
</svg>
<div class="a" style="left:0.0px;top:80.0px;width:1280.0px;height:19.4px;background:#1c1c1c;"></div>
<div class="a" style="left:0.0px;top:81.2px;width:1280.0px;height:2.0px;background:#464646;"></div>
<div class="a" style="left:4.4px;top:83.2px;width:634.8px;height:14.0px;background:#2f2f2f;"></div>
<div class="a" style="left:644.4px;top:83.2px;width:635.6px;height:13.6px;background:#2f2f2f;"></div>
<div class="a" style="left:644.6px;top:83.4px;width:4.0px;height:13.2px;background:#444444;border-right:0.6px solid #1e1e1e;"></div>
<svg width="1280" height="720"><path d="M645 86.6h3l-1.5-2.2z" fill="#0c0c0c"/></svg>
<div class="t" style="left:22.3px;top:87.57px;font-size:7.0px;color:#f4f4f4;transform:scaleX(0.960);transform-origin:0 0;-webkit-text-stroke:0.22px #f4f4f4;font-weight:bold;">View</div>
<svg width="1280" height="720">
<circle cx="13.6" cy="89.6" r="3" fill="#5a6068"/><circle cx="12.4" cy="88.2" r="1.2" fill="#8a949c"/><circle cx="15.2" cy="90.8" r="1.1" fill="#7a848c"/><path d="M17.6 96.4h2.6l-1.3 1.5z" fill="#bbb"/>
<rect x="611" y="88.6" width="3" height="3" fill="#3a78d0"/><rect x="616.6" y="86" width="2.4" height="4" fill="#3a78d0"/><path d="M609.4 92.2h5.8M615.4 90.6h4.6M613.6 95h4.8" stroke="#e8e8e8" stroke-width="0.9"/><rect x="614.8" y="92.4" width="2.4" height="2.4" fill="#3a78d0"/><path d="M619.6 95h2.4l-1.2 1.4z" fill="#bbb"/>
<circle cx="631" cy="89.6" r="4.6" fill="#3f78c4"/><circle cx="631" cy="89.6" r="4.6" fill="none" stroke="#9fc2ee" stroke-width="0.6"/><text x="629.2" y="92.4" font-size="7.6" font-weight="bold" fill="#fff" font-family="Liberation Sans">?</text>
<path d="M654.4 86.6h4v6h-4z" fill="none" stroke="#8a8a8a" stroke-width="0.7"/><path d="M653.6 88h1.6M653.6 89.8h1.6M653.6 91.6h1.6" stroke="#8a8a8a" stroke-width="0.6"/>
<rect x="665.4" y="86" width="6.8" height="7.4" fill="#e6e6e6"/>
<rect x="676.6" y="86" width="7.6" height="7.4" fill="#8a98a6"/><rect x="677.6" y="87" width="4" height="3" fill="#e8e8e8"/><circle cx="681.6" cy="91" r="1.8" fill="#d8d8d8"/>
<rect x="688.8" y="86" width="7.4" height="7.4" fill="#d8d8d8"/><rect x="689.6" y="86.8" width="2.6" height="2" fill="#e04030"/><rect x="692.8" y="86.8" width="2.6" height="2" fill="#3078e0"/><rect x="689.6" y="90" width="2.6" height="2" fill="#40b040"/><rect x="692.8" y="90" width="2.6" height="2" fill="#e8c020"/>
<rect x="706" y="86.4" width="6.4" height="6.4" fill="#3a3a3a" stroke="#c8c8c8" stroke-width="0.6"/><path d="M707.6 88l3.2 3.2M710.8 88l-3.2 3.2" stroke="#e8e8e8" stroke-width="0.8"/>
<rect x="717.6" y="86" width="7.4" height="7.4" rx="0.8" fill="#f0d23a"/><path d="M719.2 88.4h4M719.2 90.4h3" stroke="#8a7410" stroke-width="0.6"/>
<path d="M730.6 88.4h6.4v4.4h-6.4z" fill="#e89a30"/><path d="M730 87h7.6v1.7h-7.6z" fill="#f4b850"/><path d="M731.8 86.2h4v1h-4z" fill="#c88020"/>
<g fill="#e0e0e0"><rect x="1181.6" y="86.4" width="2" height="2"/><rect x="1181.6" y="91" width="2" height="2"/><rect x="1192" y="89" width="2.2" height="1.8"/><rect x="1196" y="89" width="2.2" height="1.8"/></g>
<path d="M1205.6 86.4v6.4M1205.6 88h3M1205.6 92.2h3.4" stroke="#5a8ad0" stroke-width="0.9" fill="none"/><rect x="1203.6" y="85.6" width="2.6" height="2" fill="#d8d8d8"/><rect x="1208" y="91" width="2.2" height="2.6" fill="#e8e8e8"/>
<path d="M1215 87.6h7.6v2.2h-7.6z" fill="#5a8ad0"/><rect x="1219.6" y="90.4" width="2.6" height="2.4" fill="#e8e8e8"/><rect x="1215.2" y="88" width="2" height="1.5" fill="#e8e8e8"/>
<path d="M1227.6 87h5.4M1227.6 89.6h5.4M1227.6 92.2h5.4M1229 85.8v7.6" stroke="#5a8ad0" stroke-width="0.9"/><rect x="1231.2" y="88.4" width="2.2" height="2.2" fill="#e8e8e8"/>
<path d="M1239 86.4h6.8M1239 88.8h6.8M1239 91.2h6.8M1240.2 85.6v7.4M1242.4 85.6v7.4M1244.6 85.6v7.4" stroke="#3a6ac0" stroke-width="1"/>
<circle cx="1258.4" cy="88.6" r="2.9" fill="#2f5f9f" stroke="#e8e8e8" stroke-width="0.9"/><path d="M1260.6 91l2.4 2.6" stroke="#e8e8e8" stroke-width="1.2"/>
<rect x="1267.2" y="85.8" width="7.6" height="7.4" fill="#f0f0f0"/><path d="M1269 91.6l3-3.4v3.4z" fill="#2a2a2a"/><rect x="1269" y="87.4" width="3" height="1" fill="#2a2a2a"/>
</svg>
<div class="a" style="left:2.4px;top:98.5px;width:15.6px;height:565.2px;background:#2b2b2b;border-right:0.6px solid #1a1a1a;border-left:0.6px solid #1a1a1a;"></div>
<div class="a" style="left:626.0px;top:98.5px;width:13.4px;height:565.2px;background:#323232;border-left:1px solid #1c1c1c;"></div>
<div class="a" style="left:639.2px;top:55.4px;width:5.0px;height:608.3px;background:#444444;border-left:0.8px solid #1e1e1e;border-right:0.8px solid #1e1e1e;"></div>
<svg width="1280" height="720">
<path d="M0.5 14.0h3l-1.5-2.2z" fill="#0c0c0c"/>
<path d="M0.5 27.0h3l-1.5-2.2z" fill="#0c0c0c"/>
<path d="M0.5 85.0h3l-1.5-2.2z" fill="#0c0c0c"/>
<path d="M0.5 102.0h3l-1.5-2.2z" fill="#0c0c0c"/>
<path d="M0.5 684.6h3l-1.5 2.2z" fill="#0c0c0c"/>
<rect x="3" y="99.2" width="14" height="4" fill="#3a3a3a"/><path d="M4 101.2l2.4-1.6v3.2z" fill="#ddd"/>
<rect x="3.3" y="107.4" width="11.8" height="11.2" fill="#3f3f3f" stroke="#555" stroke-width="0.5"/><g transform="translate(9.2 113.0)"><circle cx="1.6" cy="-1.4" r="3" fill="#8c9298"/><path d="M-4.4 3.6l3-7.4 3.2 7.4z" fill="#ecd868"/><path d="M-4.4 3.6l3-7.4 0.6 7.4z" fill="#f8eca0"/><path d="M4.4 4.2h1.8l-0.9 1.2z" fill="#bbb" transform="rotate(-90 5.3 4.8)"/></g>
<rect x="3.3" y="118.9" width="11.8" height="11.2" fill="#dba02a" stroke="#f0c050" stroke-width="0.5"/><g transform="translate(9.2 124.5)"><path d="M0 -4.6l4 3.4-4 3.4-4-3.4z" fill="#9aa0a8"/><path d="M0 -4.6l4 3.4-4 0.4z" fill="#c8ccd2"/><path d="M-2.6 4.6l2.6-4.4 2.6 4.4z" fill="#f6e080"/></g>
<rect x="3.3" y="130.9" width="11.8" height="11.2" fill="#3f3f3f" stroke="#555" stroke-width="0.5"/><g transform="translate(9.2 136.5)"><path d="M-3.6 -3.4l2.4-0.6 0.4 2.2-2.2 0.6zM1 -2.6l2.6 0.6-1 2.2-2.2-0.8zM-3 1l2.4 0.4-0.4 2.4-2.4-0.6zM1.2 1.4l2.2-0.4 0.4 2.4-2.4 0.4z" fill="#e8cc40"/><path d="M4.4 4.2h1.8l-0.9 1.2z" fill="#bbb" transform="rotate(-90 5.3 4.8)"/></g>
<rect x="3.3" y="142.9" width="11.8" height="11.2" fill="#3f3f3f" stroke="#555" stroke-width="0.5"/><g transform="translate(9.2 148.5)"><path d="M-3.8 -1.6l3.4-2.6 4 2.4-0.8 4-4.2 1.6z" fill="#d8bc38"/><path d="M-3.8 -1.6l3.4-2.6 4 2.4-3.6 1.8z" fill="#f4e480"/><path d="M4.4 4.2h1.8l-0.9 1.2z" fill="#bbb" transform="rotate(-90 5.3 4.8)"/></g>
<g transform="translate(9.2 169.5)"><path d="M-2.8 -5l0.3 9 2.1-2.1 1.7 3.7 1.5-0.7-1.7-3.5 2.9-0.3z" fill="#f2f2f2" stroke="#555" stroke-width="0.3"/><path d="M5.2 2.6l1.6 1-1.6 1z" fill="#bbb"/></g>
<g transform="translate(9.2 185.0)"><path d="M-5 1.4a5 2.3 0 0 0 10 0" fill="none" stroke="#e22a22" stroke-width="2"/><path d="M-5.6 0.4l1.6-1.2 0.6 2.2zM5.6 0.4l-1.6-1.2-0.6 2.2z" fill="#e22a22"/><path d="M-2.6 -3.4l2.6-1.2 2.6 1.2v3.4l-2.6 1.4-2.6-1.4z" fill="#b4bcc4"/><path d="M-2.6 -3.4l2.6 1.2 2.6-1.2-2.6-1.2z" fill="#e8eef2"/></g>
<g transform="translate(9.2 200.6)"><path d="M-5 1.4a5 2.3 0 0 0 10 0" fill="none" stroke="#e22a22" stroke-width="2"/><path d="M-5.6 0.4l1.6-1.2 0.6 2.2zM5.6 0.4l-1.6-1.2-0.6 2.2z" fill="#e22a22"/><circle cx="0" cy="-1.6" r="3.1" fill="#dcdcdc"/><circle cx="-1" cy="-2.6" r="1.1" fill="#fff"/></g>
<g transform="translate(9.2 217.0)"><path d="M-4.6 2.2a4.6 2.1 0 0 0 9.2 0" fill="none" stroke="#e22a22" stroke-width="1.8"/><circle cx="0" cy="0" r="2.7" fill="#7c8288"/><path d="M0 -5.4v3M-1.6 -3.6h3.2" stroke="#e22a22" stroke-width="1.1"/><circle cx="0" cy="0" r="1.1" fill="#b0b6bc"/></g>
<g transform="translate(9.2 233.0)"><path d="M0 -3.6v5M0 1.4l-4.2 2M0 1.4l4.6 1.6" stroke="#e0e0e0" stroke-width="0.8" fill="none"/><path d="M-1.3 -2.8l1.3-2.4 1.3 2.4z" fill="#38c838"/><circle cx="0" cy="1.4" r="1.1" fill="#f0e040"/><path d="M-4.8 3.8l1.4-1.2" stroke="#3a70e8" stroke-width="1"/><path d="M5 3.6l1.6 1-1.6 1z" fill="#bbb"/></g>
<g transform="translate(9.2 253.0)"><path d="M-4.6 1.2a3.7 3.7 0 0 1 6.6 -3.2" fill="none" stroke="#e02a20" stroke-width="2.6"/><path d="M-4.6 1.2l1.2 1.8" stroke="#f4f4f4" stroke-width="2.4"/><path d="M2 -2l1.4 1.6" stroke="#f4f4f4" stroke-width="2.4"/><path d="M-4.4 0.8a3.7 3.7 0 0 1 6 -2.9" fill="none" stroke="#e02a20" stroke-width="2.6"/><rect x="-0.6" y="-0.4" width="5" height="4.8" fill="none" stroke="#88b038" stroke-width="0.7" stroke-dasharray="1 0.6"/><path d="M5 4l1.6 1-1.6 1z" fill="#bbb"/></g>
<g transform="translate(9.2 269.7)"><path d="M-4.6 1.2a3.7 3.7 0 0 1 6.6 -3.2" fill="none" stroke="#e02a20" stroke-width="2.6"/><path d="M-4.6 1.2l1.2 1.8" stroke="#f4f4f4" stroke-width="2.4"/><path d="M2 -2l1.4 1.6" stroke="#f4f4f4" stroke-width="2.4"/><path d="M-4.4 0.8a3.7 3.7 0 0 1 6 -2.9" fill="none" stroke="#e02a20" stroke-width="2.6"/><path d="M-4.6 4.6c2.6-2.6 5.4 1.4 9-1.4" stroke="#4a90e8" stroke-width="1" fill="none"/><path d="M5 3.6l1.6 1-1.6 1z" fill="#bbb"/></g>
<g transform="translate(9.2 286.0)"><path d="M-4.6 1.2a3.7 3.7 0 0 1 6.6 -3.2" fill="none" stroke="#e02a20" stroke-width="2.6"/><path d="M-4.6 1.2l1.2 1.8" stroke="#f4f4f4" stroke-width="2.4"/><path d="M2 -2l1.4 1.6" stroke="#f4f4f4" stroke-width="2.4"/><path d="M-4.4 0.8a3.7 3.7 0 0 1 6 -2.9" fill="none" stroke="#e02a20" stroke-width="2.6"/><circle cx="2.2" cy="2.8" r="2.5" fill="#d4d4d4"/><path d="M5 4l1.6 1-1.6 1z" fill="#bbb"/></g>
<g transform="translate(9.2 301.7)"><path d="M-4.6 1.2a3.7 3.7 0 0 1 6.6 -3.2" fill="none" stroke="#e02a20" stroke-width="2.6"/><path d="M-4.6 1.2l1.2 1.8" stroke="#f4f4f4" stroke-width="2.4"/><path d="M2 -2l1.4 1.6" stroke="#f4f4f4" stroke-width="2.4"/><path d="M-4.4 0.8a3.7 3.7 0 0 1 6 -2.9" fill="none" stroke="#e02a20" stroke-width="2.6"/><path d="M5 3.6l1.6 1-1.6 1z" fill="#bbb"/></g>
<rect x="2.1" y="314.4" width="14.2" height="14.6" fill="#dba02a" stroke="#f0c050" stroke-width="0.5"/><g transform="translate(9.2 321.7)"><circle cx="0" cy="-2.6" r="2" fill="#30343a"/><circle cx="0" cy="2.6" r="2" fill="#30343a"/><circle cx="-2.8" cy="0" r="2" fill="#30343a"/><circle cx="2.8" cy="0" r="2" fill="#30343a"/><circle cx="0" cy="0" r="1.7" fill="#6a7078"/></g>
<g transform="translate(9.2 338.0)"><circle cx="-1" cy="-0.8" r="4.3" fill="#8a8a8a"/><circle cx="-1" cy="-0.8" r="4.3" fill="none" stroke="#b4b4b4" stroke-width="0.6"/><rect x="0" y="0" width="5.2" height="5.2" fill="#e05828"/><path d="M1 4.2l3.4-3.4v3.4z" fill="#f4f4f4"/></g>
<path d="M3.4 638.2l7.6-3.4 2.6 4.6-7.4 3.8z" fill="#eef2f4"/><path d="M6.2 643.2l7.4-3.8v1.3l-7.4 3.8z" fill="#d8602c"/><path d="M3.4 638.2l2.8 5v1.3l-2.8-5z" fill="#b04818"/><path d="M8.6 636.8l4.4-2" stroke="#f4f4f4" stroke-width="1.2"/><path d="M6 639.6l4-1.6" stroke="#9ab" stroke-width="0.6"/><path d="M14.2 645.2l1.6 1-1.6 1z" fill="#ccc"/>
<ellipse cx="8.2" cy="655.2" rx="5.2" ry="4.2" fill="#dcdcd6"/><ellipse cx="8.2" cy="655.2" rx="5.2" ry="4.2" fill="none" stroke="#f4f4f0" stroke-width="0.5"/><circle cx="6.4" cy="654" r="1.1" fill="#666"/><circle cx="9.8" cy="653.6" r="1.1" fill="#666"/><circle cx="8.2" cy="657" r="1.1" fill="#666"/><path d="M14.2 660.8l1.6 1-1.6 1z" fill="#ccc"/>
<rect x="628" y="98.8" width="10.4" height="4.4" fill="#3c3c3c"/><path d="M634.4 99.6l2.2 1.4-2.2 1.4z" fill="#ddd"/>
<path d="M630.4 111.6l2.4-1.6 2.4 1.6-2.4 1.6z" fill="#7a7a7a"/>
<rect x="629.6" y="121.6" width="5" height="4.6" fill="#d8d8d8"/><rect x="631.6" y="119.6" width="4" height="3" fill="#9a9a9a"/>
<circle cx="632.8" cy="137.8" r="2.8" fill="#e6e6e6"/><circle cx="632.8" cy="137.8" r="1" fill="#999"/>
<path d="M630.6 152l2.2-5 2.2 5z" fill="#f0e060"/><circle cx="632.8" cy="147.6" r="1.6" fill="#e8e8e8"/>
<rect x="627.6" y="155.8" width="10.6" height="11" fill="#dba02a"/><circle cx="632.8" cy="162" r="3" fill="#c8c8c8"/><path d="M629.4 157.4l2 2.4M636.2 157.4l-2 2.4" stroke="#f8f0a0" stroke-width="0.9"/>
<circle cx="632.8" cy="174.4" r="2.8" fill="#c8c8c8"/><path d="M629.4 169.6l2.2 2.8M636.2 169.6l-2.2 2.8" stroke="#f0e060" stroke-width="0.9"/><path d="M636 176.6l1.6 0.9-1.6 0.9z" fill="#aaa"/>
<rect x="627.6" y="181.8" width="10.6" height="11" fill="#dba02a"/><circle cx="632.8" cy="187.2" r="3.3" fill="#9a9a9a" stroke="#d8d8d8" stroke-width="0.8"/>
<rect x="629" y="197.6" width="6.6" height="3.6" fill="#d8d8d8"/><rect x="630" y="198.4" width="2" height="1.6" fill="#555"/><path d="M635 203h2.2l-1.1 1.3z" fill="#aaa"/>
<rect x="632" y="215.2" width="1.8" height="1.8" fill="#4a90e8"/>
<path d="M630.6 231.6l4-4.6" stroke="#4a90e8" stroke-width="1.1"/><rect x="630" y="231" width="1.6" height="1.6" fill="#e8e8e8"/>
<rect x="630.6" y="237.6" width="5" height="3.6" fill="none" stroke="#d8d8d8" stroke-width="0.7"/><text x="631.4" y="241" font-size="3.5" fill="#ddd" font-family="Liberation Sans">12</text><rect x="629.6" y="242.4" width="1.6" height="1.6" fill="#eee"/>
<path d="M630 255.6l5-1 1-3-4 1z" fill="#e0e0e0"/><path d="M632 252l2.6-3" stroke="#3a5ae0" stroke-width="1.2"/>
<path d="M629.6 267.6l5.6-1.6 1-3.6-5 1.2z" fill="#d0d0d0"/><path d="M631 264l3-2.4 1.6 1" stroke="#aaa" stroke-width="0.8" fill="none"/>
<path d="M630.4 281.6c0-4 2-6 5.6-6" stroke="#3a6ad0" stroke-width="0.9" fill="none" stroke-dasharray="1.2 0.8"/>
<rect x="629.6" y="287" width="6.6" height="6.6" fill="#e8d8e8"/><path d="M629.6 287l6.6 6.6M636.2 287l-6.6 6.6" stroke="#c040a0" stroke-width="1"/>
<path d="M630 307.6l5.6-6" stroke="#e03030" stroke-width="1"/><path d="M632.6 304.6l-2.4-2.6" stroke="#30c030" stroke-width="1"/><path d="M632.6 304.6l3 2.6" stroke="#3050e0" stroke-width="1"/>
<path d="M629.6 314h6.8v4h-6.8z" fill="#d0d0d0"/><path d="M630.6 312.4h4.8v1.6h-4.8z" fill="#eee"/><path d="M629 318.4h8" stroke="#eee" stroke-width="0.9"/>
<path d="M630 326l6-1.6-1 3-3 0.6z" fill="#e8e8e8"/><path d="M630.6 331l2-2" stroke="#ddd" stroke-width="0.8"/><path d="M635.4 332h2.2l-1.1 1.3z" fill="#aaa"/>
<rect x="629.6" y="337.6" width="6.4" height="6" fill="#e8e8e8"/><rect x="630.4" y="338.4" width="4.8" height="2.6" fill="#3a70c8"/>
<rect x="627.6" y="354.2" width="10.6" height="10.6" fill="#dba02a"/><path d="M630 356.6h2.4v2.4h-2.4zM633.4 356.6h2.4v2.4h-2.4zM630 360h2.4v2.4h-2.4zM633.4 360h2.4v2.4h-2.4z" fill="#fff8e0"/>
<rect x="629.4" y="367.6" width="7" height="7" fill="#f0f0f0"/><path d="M631 373l3-3.2v3.2z" fill="#222"/><rect x="631" y="369.2" width="3" height="1" fill="#222"/>
<rect x="641.2" y="343.6" width="1.2" height="1.2" fill="#aaa"/><rect x="641.2" y="374.6" width="1.2" height="1.2" fill="#aaa"/>
</svg>
<svg width="1280" height="720" viewBox="0 0 1280 720">
<defs><linearGradient id="vg" x1="0" y1="0" x2="0" y2="1"><stop offset="0" stop-color="#b7b7b7"/><stop offset="1" stop-color="#989898"/></linearGradient>
<clipPath id="cb"><path d="M240 140L480 140L480 347.8L324.4 390.0L303.0 531.5L240 531.5Z"/></clipPath>
<clipPath id="ck"><path d="M230 270L345 270L324.4 390.0L282.5 481.0L240.6 572.0L230 640Z"/></clipPath>
<clipPath id="cv"><rect x="18" y="99.2" width="608" height="564.5"/></clipPath>
</defs>
<rect x="18" y="99.2" width="608" height="564.5" fill="url(#vg)"/>
<g clip-path="url(#cv)">
<g clip-path="url(#cb)">
<path d="M270.5 294.8L387.2 270.0L386.2 265.6L269.5 290.2ZM269.7 307.6L384.5 281.7L383.6 277.4L268.7 302.9ZM268.9 320.0L382.0 293.0L381.0 288.8L267.8 315.3ZM268.2 332.0L379.5 304.0L378.5 299.7L267.0 327.4ZM267.5 343.7L377.2 314.6L376.1 310.4L266.3 339.0ZM266.8 355.0L374.9 325.0L373.7 320.7L265.5 350.4ZM266.1 366.0L372.6 334.9L371.4 330.7L264.8 361.4ZM265.4 376.8L370.5 344.6L369.2 340.4L264.1 372.2ZM264.8 387.2L368.4 354.0L367.1 349.8L263.4 382.6ZM264.2 397.3L366.4 363.1L365.0 358.9L262.7 392.7ZM263.6 407.2L364.4 372.0L362.9 367.8L262.0 402.6ZM263.0 416.8L362.5 380.6L361.0 376.4L261.4 412.3ZM262.4 426.1L360.6 388.9L359.1 384.8L260.7 421.6ZM261.9 435.2L358.8 397.0L357.2 393.0L260.1 430.8Z" fill="#505050" />
<path d="M270.0 292.5L386.7 267.8M269.2 305.3L384.1 279.5M268.4 317.7L381.5 290.9M267.6 329.7L379.0 301.9M266.9 341.4L376.6 312.5M266.1 352.7L374.3 322.8M265.4 363.7L372.0 332.8M264.8 374.5L369.8 342.5M264.1 384.9L367.7 351.9M263.4 395.0L365.7 361.0M262.8 404.9L363.7 369.9M262.2 414.5L361.7 378.5M261.6 423.9L359.8 386.9M261.0 433.0L358.0 395.0" fill="none" stroke="#8e8e8e" stroke-width="2.5" stroke-dasharray="1.9 1.3" />
<path d="M387.8 268.4L442.1 159.2L440.9 158.6L385.6 267.2ZM385.2 280.1L439.1 171.3L437.9 170.7L382.9 279.0ZM382.6 291.5L436.2 183.0L435.0 182.4L380.4 290.3ZM380.1 302.4L433.4 194.3L432.2 193.7L377.9 301.3ZM377.7 313.1L430.7 205.3L429.4 204.7L375.5 312.0ZM375.4 323.4L428.1 215.9L426.8 215.3L373.2 322.3ZM373.1 333.4L425.5 226.2L424.3 225.6L370.9 332.3ZM371.0 343.1L423.0 236.2L421.8 235.6L368.7 342.0ZM368.8 352.5L420.6 245.9L419.4 245.3L366.6 351.4ZM366.8 361.6L418.3 255.3L417.0 254.7L364.5 360.5ZM364.8 370.4L416.0 264.4L414.8 263.8L362.5 369.3ZM362.8 379.1L413.8 273.3L412.6 272.7L360.6 378.0ZM361.0 387.4L411.7 281.9L410.4 281.3L358.7 386.3ZM359.1 395.5L409.6 290.3L408.4 289.7L356.9 394.5Z" fill="#323232" />
<path d="M386.7 267.8L441.5 158.9M384.1 279.5L438.5 171.0M381.5 290.9L435.6 182.7M379.0 301.9L432.8 194.0M376.6 312.5L430.1 205.0M374.3 322.8L427.4 215.6M372.0 332.8L424.9 225.9M369.8 342.5L422.4 235.9M367.7 351.9L420.0 245.6M365.7 361.0L417.7 255.0M363.7 369.9L415.4 264.1M361.7 378.5L413.2 273.0M359.8 386.9L411.1 281.6M358.0 395.0L409.0 290.0" fill="none" stroke="#6a6a6a" stroke-width="0.5" stroke-dasharray="0.7 1.5" />
</g>
<path d="M268.9 293.1L323.1 390.7L325.7 389.3L271.1 291.9ZM268.1 305.9L321.1 403.8L323.7 402.3L270.3 304.7ZM267.3 318.3L319.2 416.4L321.8 415.0L269.5 317.1ZM266.5 330.3L317.3 428.6L320.0 427.2L268.7 329.1ZM265.8 341.9L315.5 440.4L318.2 439.1L268.0 340.8ZM265.0 353.3L313.8 451.9L316.5 450.5L267.3 352.2ZM264.3 364.3L312.1 463.0L314.8 461.7L266.6 363.2ZM263.6 375.0L310.5 473.8L313.2 472.5L265.9 373.9ZM262.9 385.4L308.9 484.2L311.6 482.9L265.2 384.4ZM262.3 395.5L307.4 494.3L310.1 493.1L264.6 394.5ZM261.7 405.4L305.9 504.2L308.6 503.0L263.9 404.4ZM261.0 415.0L304.4 513.8L307.1 512.5L263.3 414.0ZM260.4 424.4L303.0 523.0L305.7 521.9L262.7 423.4ZM259.9 433.5L301.6 532.1L304.4 530.9L262.1 432.5Z" fill="#030303" clip-path="url(#ck)"/>
<path d="M385.5 268.8L456.5 354.9L459.1 352.7L387.9 266.8ZM382.9 280.5L451.9 367.7L454.6 365.5L385.2 278.6ZM380.3 291.8L447.5 380.0L450.3 377.8L382.7 290.0ZM377.8 302.8L443.3 391.8L446.1 389.7L380.2 301.0ZM375.4 313.4L439.3 403.2L442.1 401.1L377.8 311.6ZM373.1 323.7L435.4 414.1L438.3 412.1L375.5 322.0ZM370.8 333.7L431.6 424.7L434.5 422.8L373.3 332.0ZM368.6 343.3L428.0 434.9L430.9 433.0L371.1 341.7ZM366.5 352.7L424.5 444.8L427.5 442.9L369.0 351.1ZM364.4 361.8L421.1 454.3L424.1 452.5L366.9 360.2ZM362.4 370.7L417.9 463.5L420.9 461.7L365.0 369.1ZM360.4 379.3L414.7 472.4L417.7 470.6L363.0 377.7ZM358.5 387.6L411.6 481.0L414.7 479.3L361.1 386.1ZM356.7 395.7L408.7 489.4L411.7 487.6L359.3 394.3Z" fill="#030303" />
<path d="M324.9 391.9L458.3 355.6L457.3 352.0L323.9 388.1ZM323.0 405.0L453.8 368.4L452.8 364.8L321.9 401.1ZM321.1 417.6L449.4 380.7L448.4 377.1L320.0 413.8ZM319.2 429.8L445.3 392.5L444.2 389.0L318.1 426.0ZM317.5 441.7L441.3 403.9L440.2 400.4L316.3 437.8ZM315.7 453.1L437.4 414.9L436.3 411.4L314.5 449.3ZM314.1 464.2L433.7 425.5L432.5 422.0L312.8 460.4ZM312.5 475.0L430.1 435.7L428.9 432.2L311.2 471.2ZM310.9 485.5L426.6 445.6L425.4 442.1L309.6 481.7ZM309.4 495.6L423.2 455.1L422.0 451.6L308.0 491.8ZM307.9 505.5L420.0 464.3L418.7 460.9L306.5 501.7ZM306.5 515.0L416.9 473.2L415.5 469.8L305.1 511.3ZM305.1 524.3L413.8 481.9L412.5 478.4L303.6 520.6ZM303.7 533.4L410.9 490.2L409.5 486.8L302.3 529.6Z" fill="#646464" />
<path d="M457.1 355.7L558.9 390.5L560.3 386.1L458.5 351.9ZM452.6 368.5L552.8 402.3L554.2 397.9L453.9 364.7ZM448.3 380.9L546.9 413.7L548.4 409.3L449.6 377.0ZM444.1 392.7L541.2 424.7L542.7 420.3L445.4 388.8ZM440.1 404.1L535.7 435.4L537.1 431.0L441.3 400.2ZM436.2 415.1L530.4 445.7L531.8 441.4L437.5 411.2ZM432.5 425.7L525.2 455.8L526.6 451.4L433.7 421.8ZM428.8 435.9L520.2 465.5L521.6 461.1L430.1 432.0ZM425.4 445.8L515.3 474.9L516.7 470.6L426.6 441.9ZM422.0 455.3L510.6 484.1L512.0 479.7L423.2 451.4ZM418.7 464.5L506.0 493.0L507.4 488.6L420.0 460.6ZM415.6 473.5L501.5 501.6L503.0 497.2L416.8 469.6ZM412.5 482.1L497.2 510.0L498.6 505.6L413.8 478.2ZM409.6 490.4L493.0 518.2L494.4 513.8L410.8 486.6Z" fill="#4f4f4f" />
<path d="M457.8 353.8L559.6 388.3M453.3 366.6L553.5 400.1M448.9 378.9L547.6 411.5M444.7 390.7L541.9 422.5M440.7 402.2L536.4 433.2M436.8 413.1L531.1 443.5M433.1 423.7L525.9 453.6M429.5 434.0L520.9 463.3M426.0 443.8L516.0 472.7M422.6 453.4L511.3 481.9M419.4 462.6L506.7 490.8M416.2 471.5L502.2 499.4M413.2 480.1L497.9 507.8M410.2 488.5L493.7 516.0" fill="none" stroke="#626262" stroke-width="1.8" stroke-dasharray="0.8 1.0" />
<path d="M283.3 481.4L325.4 390.5L323.4 389.5L281.7 480.6ZM282.1 491.9L323.4 403.5L321.4 402.6L280.5 491.1ZM281.0 502.1L321.5 416.2L319.5 415.2L279.4 501.4ZM279.9 512.2L319.7 428.4L317.7 427.4L278.2 511.4ZM278.7 522.0L317.9 440.2L315.9 439.3L277.1 521.2ZM277.7 531.6L316.1 451.7L314.1 450.7L276.0 530.8ZM276.6 541.0L314.5 462.8L312.5 461.9L275.0 540.2ZM275.6 550.1L312.8 473.6L310.8 472.6L274.0 549.4ZM274.6 559.1L311.2 484.0L309.3 483.1L272.9 558.4ZM273.6 567.9L309.7 494.2L307.7 493.2L272.0 567.2ZM272.6 576.6L308.2 504.1L306.2 503.1L271.0 575.8ZM271.7 585.0L306.8 513.6L304.8 512.7L270.0 584.2ZM270.7 593.3L305.4 522.9L303.4 522.0L269.1 592.5ZM269.8 601.4L304.0 532.0L302.0 531.0L268.2 600.6Z" fill="#424242" />
<path d="M282.5 481.0L324.4 390.0M281.3 491.5L322.4 403.1M280.2 501.8L320.5 415.7M279.0 511.8L318.7 427.9M277.9 521.6L316.9 439.7M276.9 531.2L315.1 451.2M275.8 540.6L313.5 462.3M274.8 549.8L311.8 473.1M273.8 558.7L310.2 483.6M272.8 567.6L308.7 493.7M271.8 576.2L307.2 503.6M270.8 584.6L305.8 513.1M269.9 592.9L304.4 522.5M269.0 601.0L303.0 531.5" fill="none" stroke="#6e6e6e" stroke-width="0.7" stroke-dasharray="0.8 1.6" />
<path d="M51.1 226.1L269.3 294.6L270.7 290.4L52.7 221.3ZM53.6 238.9L268.5 307.4L269.9 303.1L55.1 234.2ZM56.0 251.4L267.7 319.8L269.1 315.5L57.5 246.7ZM58.3 263.6L266.9 331.8L268.3 327.6L59.9 258.9ZM60.6 275.5L266.2 343.5L267.6 339.2L62.2 270.8ZM62.8 287.1L265.4 354.8L266.9 350.6L64.4 282.4ZM65.0 298.5L264.7 365.9L266.2 361.6L66.6 293.7ZM67.1 309.5L264.0 376.6L265.5 372.3L68.7 304.8ZM69.1 320.3L263.3 387.0L264.8 382.8L70.8 315.6ZM71.2 330.9L262.7 397.2L264.2 392.9L72.8 326.1ZM73.1 341.1L262.1 407.0L263.5 402.8L74.8 336.4ZM75.0 351.2L261.4 416.6L262.9 412.4L76.7 346.5ZM76.9 361.0L260.8 426.0L262.3 421.8L78.6 356.3ZM78.8 370.7L260.2 435.1L261.8 430.9L80.4 365.9Z" fill="#3a3a3a" />
<path d="M51.9 223.7L270.0 292.5M54.4 236.5L269.2 305.3M56.8 249.1L268.4 317.7M59.1 261.3L267.6 329.7M61.4 273.2L266.9 341.4M63.6 284.8L266.1 352.7M65.8 296.1L265.4 363.7M67.9 307.2L264.8 374.5M70.0 318.0L264.1 384.9M72.0 328.5L263.4 395.0M73.9 338.8L262.8 404.9M75.9 348.9L262.2 414.5M77.8 358.7L261.6 423.9M79.6 368.3L261.0 433.0" fill="none" stroke="#646464" stroke-width="2.4" stroke-dasharray="2.0 1.7" />
</g>
<g stroke-width="1.7" fill="none" stroke-linecap="round"><path d="M28.1 653.5L29.2 646.6" stroke="#2ed83a"/><path d="M28.1 653.7L22 655.2" stroke="#2430f0"/><path d="M28.3 653.9L32 657.6" stroke="#e23a3a"/></g>
<path d="M29.4 644.6l1 2 1.2-2.2" stroke="#2ed83a" stroke-width="0.9" fill="none"/><path d="M32.6 656.4l2.2 2.4M34.8 656.4l-2.2 2.4" stroke="#e23a3a" stroke-width="0.8"/><path d="M20.6 654h1.8l-1.8 2.2h1.8" stroke="#2430f0" stroke-width="0.8" fill="none"/>
<g fill="none" stroke="#c9c010" stroke-width="1.1"><rect x="557.3" y="103.8" width="27" height="7.4"/><rect x="586.3" y="103.8" width="28" height="7.4"/></g>
<g font-size="6.3" font-weight="bold" fill="#c9c010" stroke="#c9c010" stroke-width="0.25" font-family="Liberation Sans"><text transform="translate(559.2 109.6) scale(0.88 1)">persp1</text><text transform="translate(588.4 109.6) scale(0.88 1)">no cam</text></g>
<path d="M579.3 106.5h3.6l-1.8 2.4zM608.8 106.5h3.6l-1.8 2.4z" fill="#cdc51c"/>
</svg>
<svg width="1280" height="720" viewBox="0 0 1280 720" font-family="Liberation Sans, sans-serif">
<defs><clipPath id="cn"><rect x="645" y="98.5" width="635" height="565"/></clipPath></defs>
<rect x="645" y="98.5" width="635" height="565" fill="#2d2d2d"/>
<g clip-path="url(#cn)">
<text x="1235" y="108.6" font-size="9" font-weight="bold" fill="#424242">Geometry</text>
<path d="M1032.2 191.6C1032.2 205.0 755.1 220.1 755.1 233.5M767.7 246.5C767.7 343.7 995.2 453.0 995.2 550.2M1032.2 191.6C1032.2 211.4 786.5 233.6 786.5 253.3M799.1 266.4C799.1 357.2 995.2 459.4 995.2 550.2M1032.2 191.6C1032.2 217.7 818.0 247.1 818.0 273.2M830.6 286.2C830.6 370.7 995.2 465.7 995.2 550.2M1032.2 191.6C1032.2 224.1 849.4 260.6 849.4 293.1M862.0 306.1C862.0 384.2 995.2 472.1 995.2 550.2M1032.2 191.6C1032.2 230.4 880.9 274.1 880.9 312.9M893.5 325.9C893.5 397.7 995.2 478.4 995.2 550.2M1032.2 191.6C1032.2 236.8 912.3 287.6 912.3 332.8M924.9 345.8C924.9 411.2 995.2 484.8 995.2 550.2M1032.2 191.6C1032.2 243.1 943.7 301.1 943.7 352.6M956.3 365.6C956.3 424.7 995.2 491.1 995.2 550.2M1032.2 191.6C1032.2 249.5 975.2 314.6 975.2 372.5M987.8 385.5C987.8 438.2 995.2 497.5 995.2 550.2M1032.2 191.6C1032.2 255.8 1006.6 328.1 1006.6 392.3M1019.2 405.3C1019.2 451.7 995.2 503.8 995.2 550.2M1032.2 191.6C1032.2 262.2 1038.1 341.6 1038.1 412.1M1050.7 425.1C1050.7 465.2 995.2 510.2 995.2 550.2M1032.2 191.6C1032.2 268.5 1069.5 355.1 1069.5 432.0M1082.1 445.0C1082.1 478.7 995.2 516.5 995.2 550.2M1032.2 191.6C1032.2 274.9 1100.9 368.6 1100.9 451.9M1113.5 464.9C1113.5 492.2 995.2 522.9 995.2 550.2M1032.2 191.6C1032.2 281.2 1132.4 382.1 1132.4 471.7M1145.0 484.7C1145.0 505.7 995.2 529.2 995.2 550.2M1032.2 191.6C1032.2 287.6 1163.8 395.6 1163.8 491.6M1176.4 504.6C1176.4 519.2 995.2 535.6 995.2 550.2M1032.5 150.5L1032.2 178.5" fill="none" stroke="#9e9e9e" stroke-width="1.0"/>
<path transform="translate(911.5 210.7) rotate(174.1)" d="M2.9 0L-2.5 -2.3L-2.5 2.3Z" fill="#b2b2b2"/><path transform="translate(866.8 385.0) rotate(42.4)" d="M2.9 0L-2.5 -2.3L-2.5 2.3Z" fill="#b2b2b2"/><path transform="translate(925.2 219.8) rotate(170.2)" d="M2.9 0L-2.5 -2.3L-2.5 2.3Z" fill="#b2b2b2"/><path transform="translate(884.6 395.8) rotate(44.7)" d="M2.9 0L-2.5 -2.3L-2.5 2.3Z" fill="#b2b2b2"/><path transform="translate(938.9 228.8) rotate(165.4)" d="M2.9 0L-2.5 -2.3L-2.5 2.3Z" fill="#b2b2b2"/><path transform="translate(902.3 406.6) rotate(47.6)" d="M2.9 0L-2.5 -2.3L-2.5 2.3Z" fill="#b2b2b2"/><path transform="translate(952.6 237.9) rotate(159.2)" d="M2.9 0L-2.5 -2.3L-2.5 2.3Z" fill="#b2b2b2"/><path transform="translate(920.0 417.4) rotate(51.4)" d="M2.9 0L-2.5 -2.3L-2.5 2.3Z" fill="#b2b2b2"/><path transform="translate(966.3 246.9) rotate(151.3)" d="M2.9 0L-2.5 -2.3L-2.5 2.3Z" fill="#b2b2b2"/><path transform="translate(937.8 428.2) rotate(56.4)" d="M2.9 0L-2.5 -2.3L-2.5 2.3Z" fill="#b2b2b2"/><path transform="translate(980.0 256.0) rotate(141.2)" d="M2.9 0L-2.5 -2.3L-2.5 2.3Z" fill="#b2b2b2"/><path transform="translate(955.5 439.0) rotate(63.3)" d="M2.9 0L-2.5 -2.3L-2.5 2.3Z" fill="#b2b2b2"/><path transform="translate(993.7 265.0) rotate(128.8)" d="M2.9 0L-2.5 -2.3L-2.5 2.3Z" fill="#b2b2b2"/><path transform="translate(973.3 449.8) rotate(72.9)" d="M2.9 0L-2.5 -2.3L-2.5 2.3Z" fill="#b2b2b2"/><path transform="translate(1007.4 274.1) rotate(114.8)" d="M2.9 0L-2.5 -2.3L-2.5 2.3Z" fill="#b2b2b2"/><path transform="translate(991.0 460.6) rotate(86.2)" d="M2.9 0L-2.5 -2.3L-2.5 2.3Z" fill="#b2b2b2"/><path transform="translate(1021.1 283.1) rotate(100.6)" d="M2.9 0L-2.5 -2.3L-2.5 2.3Z" fill="#b2b2b2"/><path transform="translate(1008.8 471.4) rotate(103.6)" d="M2.9 0L-2.5 -2.3L-2.5 2.3Z" fill="#b2b2b2"/><path transform="translate(1034.8 292.2) rotate(87.8)" d="M2.9 0L-2.5 -2.3L-2.5 2.3Z" fill="#b2b2b2"/><path transform="translate(1026.5 482.2) rotate(123.0)" d="M2.9 0L-2.5 -2.3L-2.5 2.3Z" fill="#b2b2b2"/><path transform="translate(1048.5 301.3) rotate(77.2)" d="M2.9 0L-2.5 -2.3L-2.5 2.3Z" fill="#b2b2b2"/><path transform="translate(1044.2 493.0) rotate(140.4)" d="M2.9 0L-2.5 -2.3L-2.5 2.3Z" fill="#b2b2b2"/><path transform="translate(1062.1 310.3) rotate(68.9)" d="M2.9 0L-2.5 -2.3L-2.5 2.3Z" fill="#b2b2b2"/><path transform="translate(1062.0 503.8) rotate(153.8)" d="M2.9 0L-2.5 -2.3L-2.5 2.3Z" fill="#b2b2b2"/><path transform="translate(1075.8 319.4) rotate(62.4)" d="M2.9 0L-2.5 -2.3L-2.5 2.3Z" fill="#b2b2b2"/><path transform="translate(1079.7 514.6) rotate(163.4)" d="M2.9 0L-2.5 -2.3L-2.5 2.3Z" fill="#b2b2b2"/><path transform="translate(1089.5 328.4) rotate(57.3)" d="M2.9 0L-2.5 -2.3L-2.5 2.3Z" fill="#b2b2b2"/><path transform="translate(1097.5 525.4) rotate(170.2)" d="M2.9 0L-2.5 -2.3L-2.5 2.3Z" fill="#b2b2b2"/>
<circle cx="995.3" cy="591.2" r="20.6" fill="#7c61a6"/><circle cx="995.3" cy="591.2" r="15.6" fill="#417fa2"/>
<path d="M995.2 563.5V584" stroke="#9a7a4c" stroke-width="1"/>
<g transform="translate(751.10 235.50)"><rect x="0.5" y="-2" width="7.4" height="1.5" fill="#8a8a8a"/><rect x="8.9" y="-2" width="7.0" height="1.5" fill="#8a8a8a"/><rect x="17.8" y="-2" width="7.0" height="1.5" fill="#8a8a8a"/><rect x="26.2" y="-2" width="6.6" height="1.5" fill="#8a8a8a"/><rect x="13.1" y="9.5" width="7" height="1.5" fill="#8a8a8a"/><rect x="0" y="0" width="32.8" height="9.2" fill="#bdbdbd"/><rect x="0.45" y="0.5" width="3.30" height="8.2" fill="#d8d8d8" stroke="#cfc750" stroke-width="0.8"/><rect x="4.85" y="0.5" width="3.10" height="8.2" fill="#d8d8d8" stroke="#c4694a" stroke-width="0.8"/><rect x="8.7" y="0.2" width="16.6" height="8.8" fill="#d6d6d6"/><path d="M8.9 0.2v8.8M25.1 0.2v8.8" stroke="#a8a8a8" stroke-width="0.5"/><rect x="26.05" y="0.5" width="2.50" height="8.2" fill="#d8d8d8" stroke="#cf7fca" stroke-width="0.8"/><rect x="29.75" y="0.5" width="2.60" height="8.2" fill="#d8d8d8" stroke="#508cc8" stroke-width="0.8"/><path d="M14 3.2h5v3.6h-5z" fill="#e8a030"/><path d="M13.7 2.6h5.6v1.1h-5.6z" fill="#f0b850"/><path d="M14.6 2.2h3.8v0.6h-3.8z" fill="#c88020"/></g>
<text transform="translate(786.3 242.6) scale(0.9 1)" font-size="5.9" fill="#aaa2e6" stroke="#aaa2e6" stroke-width="0.15">lineMaker2_1</text>
<g transform="translate(782.54 255.35)"><rect x="0.5" y="-2" width="7.4" height="1.5" fill="#8a8a8a"/><rect x="8.9" y="-2" width="7.0" height="1.5" fill="#8a8a8a"/><rect x="17.8" y="-2" width="7.0" height="1.5" fill="#8a8a8a"/><rect x="26.2" y="-2" width="6.6" height="1.5" fill="#8a8a8a"/><rect x="13.1" y="9.5" width="7" height="1.5" fill="#8a8a8a"/><rect x="0" y="0" width="32.8" height="9.2" fill="#bdbdbd"/><rect x="0.45" y="0.5" width="3.30" height="8.2" fill="#d8d8d8" stroke="#cfc750" stroke-width="0.8"/><rect x="4.85" y="0.5" width="3.10" height="8.2" fill="#d8d8d8" stroke="#c4694a" stroke-width="0.8"/><rect x="8.7" y="0.2" width="16.6" height="8.8" fill="#d6d6d6"/><path d="M8.9 0.2v8.8M25.1 0.2v8.8" stroke="#a8a8a8" stroke-width="0.5"/><rect x="26.05" y="0.5" width="2.50" height="8.2" fill="#d8d8d8" stroke="#cf7fca" stroke-width="0.8"/><rect x="29.75" y="0.5" width="2.60" height="8.2" fill="#d8d8d8" stroke="#508cc8" stroke-width="0.8"/><path d="M14 3.2h5v3.6h-5z" fill="#e8a030"/><path d="M13.7 2.6h5.6v1.1h-5.6z" fill="#f0b850"/><path d="M14.6 2.2h3.8v0.6h-3.8z" fill="#c88020"/></g>
<text transform="translate(817.7 262.4) scale(0.9 1)" font-size="5.9" fill="#aaa2e6" stroke="#aaa2e6" stroke-width="0.15">lineMaker2_2</text>
<g transform="translate(813.98 275.20)"><rect x="0.5" y="-2" width="7.4" height="1.5" fill="#8a8a8a"/><rect x="8.9" y="-2" width="7.0" height="1.5" fill="#8a8a8a"/><rect x="17.8" y="-2" width="7.0" height="1.5" fill="#8a8a8a"/><rect x="26.2" y="-2" width="6.6" height="1.5" fill="#8a8a8a"/><rect x="13.1" y="9.5" width="7" height="1.5" fill="#8a8a8a"/><rect x="0" y="0" width="32.8" height="9.2" fill="#bdbdbd"/><rect x="0.45" y="0.5" width="3.30" height="8.2" fill="#d8d8d8" stroke="#cfc750" stroke-width="0.8"/><rect x="4.85" y="0.5" width="3.10" height="8.2" fill="#d8d8d8" stroke="#c4694a" stroke-width="0.8"/><rect x="8.7" y="0.2" width="16.6" height="8.8" fill="#d6d6d6"/><path d="M8.9 0.2v8.8M25.1 0.2v8.8" stroke="#a8a8a8" stroke-width="0.5"/><rect x="26.05" y="0.5" width="2.50" height="8.2" fill="#d8d8d8" stroke="#cf7fca" stroke-width="0.8"/><rect x="29.75" y="0.5" width="2.60" height="8.2" fill="#d8d8d8" stroke="#508cc8" stroke-width="0.8"/><path d="M14 3.2h5v3.6h-5z" fill="#e8a030"/><path d="M13.7 2.6h5.6v1.1h-5.6z" fill="#f0b850"/><path d="M14.6 2.2h3.8v0.6h-3.8z" fill="#c88020"/></g>
<text transform="translate(849.2 282.3) scale(0.9 1)" font-size="5.9" fill="#aaa2e6" stroke="#aaa2e6" stroke-width="0.15">lineMaker2_3</text>
<g transform="translate(845.42 295.05)"><rect x="0.5" y="-2" width="7.4" height="1.5" fill="#8a8a8a"/><rect x="8.9" y="-2" width="7.0" height="1.5" fill="#8a8a8a"/><rect x="17.8" y="-2" width="7.0" height="1.5" fill="#8a8a8a"/><rect x="26.2" y="-2" width="6.6" height="1.5" fill="#8a8a8a"/><rect x="13.1" y="9.5" width="7" height="1.5" fill="#8a8a8a"/><rect x="0" y="0" width="32.8" height="9.2" fill="#bdbdbd"/><rect x="0.45" y="0.5" width="3.30" height="8.2" fill="#d8d8d8" stroke="#cfc750" stroke-width="0.8"/><rect x="4.85" y="0.5" width="3.10" height="8.2" fill="#d8d8d8" stroke="#c4694a" stroke-width="0.8"/><rect x="8.7" y="0.2" width="16.6" height="8.8" fill="#d6d6d6"/><path d="M8.9 0.2v8.8M25.1 0.2v8.8" stroke="#a8a8a8" stroke-width="0.5"/><rect x="26.05" y="0.5" width="2.50" height="8.2" fill="#d8d8d8" stroke="#cf7fca" stroke-width="0.8"/><rect x="29.75" y="0.5" width="2.60" height="8.2" fill="#d8d8d8" stroke="#508cc8" stroke-width="0.8"/><path d="M14 3.2h5v3.6h-5z" fill="#e8a030"/><path d="M13.7 2.6h5.6v1.1h-5.6z" fill="#f0b850"/><path d="M14.6 2.2h3.8v0.6h-3.8z" fill="#c88020"/></g>
<text transform="translate(880.6 302.2) scale(0.9 1)" font-size="5.9" fill="#aaa2e6" stroke="#aaa2e6" stroke-width="0.15">lineMaker2_4</text>
<g transform="translate(876.86 314.90)"><rect x="0.5" y="-2" width="7.4" height="1.5" fill="#8a8a8a"/><rect x="8.9" y="-2" width="7.0" height="1.5" fill="#8a8a8a"/><rect x="17.8" y="-2" width="7.0" height="1.5" fill="#8a8a8a"/><rect x="26.2" y="-2" width="6.6" height="1.5" fill="#8a8a8a"/><rect x="13.1" y="9.5" width="7" height="1.5" fill="#8a8a8a"/><rect x="0" y="0" width="32.8" height="9.2" fill="#bdbdbd"/><rect x="0.45" y="0.5" width="3.30" height="8.2" fill="#d8d8d8" stroke="#cfc750" stroke-width="0.8"/><rect x="4.85" y="0.5" width="3.10" height="8.2" fill="#d8d8d8" stroke="#c4694a" stroke-width="0.8"/><rect x="8.7" y="0.2" width="16.6" height="8.8" fill="#d6d6d6"/><path d="M8.9 0.2v8.8M25.1 0.2v8.8" stroke="#a8a8a8" stroke-width="0.5"/><rect x="26.05" y="0.5" width="2.50" height="8.2" fill="#d8d8d8" stroke="#cf7fca" stroke-width="0.8"/><rect x="29.75" y="0.5" width="2.60" height="8.2" fill="#d8d8d8" stroke="#508cc8" stroke-width="0.8"/><path d="M14 3.2h5v3.6h-5z" fill="#e8a030"/><path d="M13.7 2.6h5.6v1.1h-5.6z" fill="#f0b850"/><path d="M14.6 2.2h3.8v0.6h-3.8z" fill="#c88020"/></g>
<text transform="translate(912.1 322.0) scale(0.9 1)" font-size="5.9" fill="#aaa2e6" stroke="#aaa2e6" stroke-width="0.15">lineMaker2_5</text>
<g transform="translate(908.30 334.75)"><rect x="0.5" y="-2" width="7.4" height="1.5" fill="#8a8a8a"/><rect x="8.9" y="-2" width="7.0" height="1.5" fill="#8a8a8a"/><rect x="17.8" y="-2" width="7.0" height="1.5" fill="#8a8a8a"/><rect x="26.2" y="-2" width="6.6" height="1.5" fill="#8a8a8a"/><rect x="13.1" y="9.5" width="7" height="1.5" fill="#8a8a8a"/><rect x="0" y="0" width="32.8" height="9.2" fill="#bdbdbd"/><rect x="0.45" y="0.5" width="3.30" height="8.2" fill="#d8d8d8" stroke="#cfc750" stroke-width="0.8"/><rect x="4.85" y="0.5" width="3.10" height="8.2" fill="#d8d8d8" stroke="#c4694a" stroke-width="0.8"/><rect x="8.7" y="0.2" width="16.6" height="8.8" fill="#d6d6d6"/><path d="M8.9 0.2v8.8M25.1 0.2v8.8" stroke="#a8a8a8" stroke-width="0.5"/><rect x="26.05" y="0.5" width="2.50" height="8.2" fill="#d8d8d8" stroke="#cf7fca" stroke-width="0.8"/><rect x="29.75" y="0.5" width="2.60" height="8.2" fill="#d8d8d8" stroke="#508cc8" stroke-width="0.8"/><path d="M14 3.2h5v3.6h-5z" fill="#e8a030"/><path d="M13.7 2.6h5.6v1.1h-5.6z" fill="#f0b850"/><path d="M14.6 2.2h3.8v0.6h-3.8z" fill="#c88020"/></g>
<text transform="translate(943.5 341.9) scale(0.9 1)" font-size="5.9" fill="#aaa2e6" stroke="#aaa2e6" stroke-width="0.15">lineMaker2_6</text>
<g transform="translate(939.74 354.60)"><rect x="0.5" y="-2" width="7.4" height="1.5" fill="#8a8a8a"/><rect x="8.9" y="-2" width="7.0" height="1.5" fill="#8a8a8a"/><rect x="17.8" y="-2" width="7.0" height="1.5" fill="#8a8a8a"/><rect x="26.2" y="-2" width="6.6" height="1.5" fill="#8a8a8a"/><rect x="13.1" y="9.5" width="7" height="1.5" fill="#8a8a8a"/><rect x="0" y="0" width="32.8" height="9.2" fill="#bdbdbd"/><rect x="0.45" y="0.5" width="3.30" height="8.2" fill="#d8d8d8" stroke="#cfc750" stroke-width="0.8"/><rect x="4.85" y="0.5" width="3.10" height="8.2" fill="#d8d8d8" stroke="#c4694a" stroke-width="0.8"/><rect x="8.7" y="0.2" width="16.6" height="8.8" fill="#d6d6d6"/><path d="M8.9 0.2v8.8M25.1 0.2v8.8" stroke="#a8a8a8" stroke-width="0.5"/><rect x="26.05" y="0.5" width="2.50" height="8.2" fill="#d8d8d8" stroke="#cf7fca" stroke-width="0.8"/><rect x="29.75" y="0.5" width="2.60" height="8.2" fill="#d8d8d8" stroke="#508cc8" stroke-width="0.8"/><path d="M14 3.2h5v3.6h-5z" fill="#e8a030"/><path d="M13.7 2.6h5.6v1.1h-5.6z" fill="#f0b850"/><path d="M14.6 2.2h3.8v0.6h-3.8z" fill="#c88020"/></g>
<text transform="translate(974.9 361.7) scale(0.9 1)" font-size="5.9" fill="#aaa2e6" stroke="#aaa2e6" stroke-width="0.15">lineMaker2_7</text>
<g transform="translate(971.18 374.45)"><rect x="0.5" y="-2" width="7.4" height="1.5" fill="#8a8a8a"/><rect x="8.9" y="-2" width="7.0" height="1.5" fill="#8a8a8a"/><rect x="17.8" y="-2" width="7.0" height="1.5" fill="#8a8a8a"/><rect x="26.2" y="-2" width="6.6" height="1.5" fill="#8a8a8a"/><rect x="13.1" y="9.5" width="7" height="1.5" fill="#8a8a8a"/><rect x="0" y="0" width="32.8" height="9.2" fill="#bdbdbd"/><rect x="0.45" y="0.5" width="3.30" height="8.2" fill="#d8d8d8" stroke="#cfc750" stroke-width="0.8"/><rect x="4.85" y="0.5" width="3.10" height="8.2" fill="#d8d8d8" stroke="#c4694a" stroke-width="0.8"/><rect x="8.7" y="0.2" width="16.6" height="8.8" fill="#d6d6d6"/><path d="M8.9 0.2v8.8M25.1 0.2v8.8" stroke="#a8a8a8" stroke-width="0.5"/><rect x="26.05" y="0.5" width="2.50" height="8.2" fill="#d8d8d8" stroke="#cf7fca" stroke-width="0.8"/><rect x="29.75" y="0.5" width="2.60" height="8.2" fill="#d8d8d8" stroke="#508cc8" stroke-width="0.8"/><path d="M14 3.2h5v3.6h-5z" fill="#e8a030"/><path d="M13.7 2.6h5.6v1.1h-5.6z" fill="#f0b850"/><path d="M14.6 2.2h3.8v0.6h-3.8z" fill="#c88020"/></g>
<text transform="translate(1006.4 381.6) scale(0.9 1)" font-size="5.9" fill="#aaa2e6" stroke="#aaa2e6" stroke-width="0.15">lineMaker2_8</text>
<g transform="translate(1002.62 394.30)"><rect x="0.5" y="-2" width="7.4" height="1.5" fill="#8a8a8a"/><rect x="8.9" y="-2" width="7.0" height="1.5" fill="#8a8a8a"/><rect x="17.8" y="-2" width="7.0" height="1.5" fill="#8a8a8a"/><rect x="26.2" y="-2" width="6.6" height="1.5" fill="#8a8a8a"/><rect x="13.1" y="9.5" width="7" height="1.5" fill="#8a8a8a"/><rect x="0" y="0" width="32.8" height="9.2" fill="#bdbdbd"/><rect x="0.45" y="0.5" width="3.30" height="8.2" fill="#d8d8d8" stroke="#cfc750" stroke-width="0.8"/><rect x="4.85" y="0.5" width="3.10" height="8.2" fill="#d8d8d8" stroke="#c4694a" stroke-width="0.8"/><rect x="8.7" y="0.2" width="16.6" height="8.8" fill="#d6d6d6"/><path d="M8.9 0.2v8.8M25.1 0.2v8.8" stroke="#a8a8a8" stroke-width="0.5"/><rect x="26.05" y="0.5" width="2.50" height="8.2" fill="#d8d8d8" stroke="#cf7fca" stroke-width="0.8"/><rect x="29.75" y="0.5" width="2.60" height="8.2" fill="#d8d8d8" stroke="#508cc8" stroke-width="0.8"/><path d="M14 3.2h5v3.6h-5z" fill="#e8a030"/><path d="M13.7 2.6h5.6v1.1h-5.6z" fill="#f0b850"/><path d="M14.6 2.2h3.8v0.6h-3.8z" fill="#c88020"/></g>
<text transform="translate(1037.8 401.4) scale(0.9 1)" font-size="5.9" fill="#aaa2e6" stroke="#aaa2e6" stroke-width="0.15">lineMaker2_9</text>
<g transform="translate(1034.06 414.15)"><rect x="0.5" y="-2" width="7.4" height="1.5" fill="#8a8a8a"/><rect x="8.9" y="-2" width="7.0" height="1.5" fill="#8a8a8a"/><rect x="17.8" y="-2" width="7.0" height="1.5" fill="#8a8a8a"/><rect x="26.2" y="-2" width="6.6" height="1.5" fill="#8a8a8a"/><rect x="13.1" y="9.5" width="7" height="1.5" fill="#8a8a8a"/><rect x="0" y="0" width="32.8" height="9.2" fill="#bdbdbd"/><rect x="0.45" y="0.5" width="3.30" height="8.2" fill="#d8d8d8" stroke="#cfc750" stroke-width="0.8"/><rect x="4.85" y="0.5" width="3.10" height="8.2" fill="#d8d8d8" stroke="#c4694a" stroke-width="0.8"/><rect x="8.7" y="0.2" width="16.6" height="8.8" fill="#d6d6d6"/><path d="M8.9 0.2v8.8M25.1 0.2v8.8" stroke="#a8a8a8" stroke-width="0.5"/><rect x="26.05" y="0.5" width="2.50" height="8.2" fill="#d8d8d8" stroke="#cf7fca" stroke-width="0.8"/><rect x="29.75" y="0.5" width="2.60" height="8.2" fill="#d8d8d8" stroke="#508cc8" stroke-width="0.8"/><path d="M14 3.2h5v3.6h-5z" fill="#e8a030"/><path d="M13.7 2.6h5.6v1.1h-5.6z" fill="#f0b850"/><path d="M14.6 2.2h3.8v0.6h-3.8z" fill="#c88020"/></g>
<text transform="translate(1069.3 421.2) scale(0.9 1)" font-size="5.9" fill="#aaa2e6" stroke="#aaa2e6" stroke-width="0.15">lineMaker2_10</text>
<g transform="translate(1065.50 434.00)"><rect x="0.5" y="-2" width="7.4" height="1.5" fill="#8a8a8a"/><rect x="8.9" y="-2" width="7.0" height="1.5" fill="#8a8a8a"/><rect x="17.8" y="-2" width="7.0" height="1.5" fill="#8a8a8a"/><rect x="26.2" y="-2" width="6.6" height="1.5" fill="#8a8a8a"/><rect x="13.1" y="9.5" width="7" height="1.5" fill="#8a8a8a"/><rect x="0" y="0" width="32.8" height="9.2" fill="#bdbdbd"/><rect x="0.45" y="0.5" width="3.30" height="8.2" fill="#d8d8d8" stroke="#cfc750" stroke-width="0.8"/><rect x="4.85" y="0.5" width="3.10" height="8.2" fill="#d8d8d8" stroke="#c4694a" stroke-width="0.8"/><rect x="8.7" y="0.2" width="16.6" height="8.8" fill="#d6d6d6"/><path d="M8.9 0.2v8.8M25.1 0.2v8.8" stroke="#a8a8a8" stroke-width="0.5"/><rect x="26.05" y="0.5" width="2.50" height="8.2" fill="#d8d8d8" stroke="#cf7fca" stroke-width="0.8"/><rect x="29.75" y="0.5" width="2.60" height="8.2" fill="#d8d8d8" stroke="#508cc8" stroke-width="0.8"/><path d="M14 3.2h5v3.6h-5z" fill="#e8a030"/><path d="M13.7 2.6h5.6v1.1h-5.6z" fill="#f0b850"/><path d="M14.6 2.2h3.8v0.6h-3.8z" fill="#c88020"/></g>
<text transform="translate(1100.7 441.1) scale(0.9 1)" font-size="5.9" fill="#aaa2e6" stroke="#aaa2e6" stroke-width="0.15">lineMaker2_11</text>
<g transform="translate(1096.94 453.85)"><rect x="0.5" y="-2" width="7.4" height="1.5" fill="#8a8a8a"/><rect x="8.9" y="-2" width="7.0" height="1.5" fill="#8a8a8a"/><rect x="17.8" y="-2" width="7.0" height="1.5" fill="#8a8a8a"/><rect x="26.2" y="-2" width="6.6" height="1.5" fill="#8a8a8a"/><rect x="13.1" y="9.5" width="7" height="1.5" fill="#8a8a8a"/><rect x="0" y="0" width="32.8" height="9.2" fill="#bdbdbd"/><rect x="0.45" y="0.5" width="3.30" height="8.2" fill="#d8d8d8" stroke="#cfc750" stroke-width="0.8"/><rect x="4.85" y="0.5" width="3.10" height="8.2" fill="#d8d8d8" stroke="#c4694a" stroke-width="0.8"/><rect x="8.7" y="0.2" width="16.6" height="8.8" fill="#d6d6d6"/><path d="M8.9 0.2v8.8M25.1 0.2v8.8" stroke="#a8a8a8" stroke-width="0.5"/><rect x="26.05" y="0.5" width="2.50" height="8.2" fill="#d8d8d8" stroke="#cf7fca" stroke-width="0.8"/><rect x="29.75" y="0.5" width="2.60" height="8.2" fill="#d8d8d8" stroke="#508cc8" stroke-width="0.8"/><path d="M14 3.2h5v3.6h-5z" fill="#e8a030"/><path d="M13.7 2.6h5.6v1.1h-5.6z" fill="#f0b850"/><path d="M14.6 2.2h3.8v0.6h-3.8z" fill="#c88020"/></g>
<text transform="translate(1132.1 461.0) scale(0.9 1)" font-size="5.9" fill="#aaa2e6" stroke="#aaa2e6" stroke-width="0.15">lineMaker2_12</text>
<g transform="translate(1128.38 473.70)"><rect x="0.5" y="-2" width="7.4" height="1.5" fill="#8a8a8a"/><rect x="8.9" y="-2" width="7.0" height="1.5" fill="#8a8a8a"/><rect x="17.8" y="-2" width="7.0" height="1.5" fill="#8a8a8a"/><rect x="26.2" y="-2" width="6.6" height="1.5" fill="#8a8a8a"/><rect x="13.1" y="9.5" width="7" height="1.5" fill="#8a8a8a"/><rect x="0" y="0" width="32.8" height="9.2" fill="#bdbdbd"/><rect x="0.45" y="0.5" width="3.30" height="8.2" fill="#d8d8d8" stroke="#cfc750" stroke-width="0.8"/><rect x="4.85" y="0.5" width="3.10" height="8.2" fill="#d8d8d8" stroke="#c4694a" stroke-width="0.8"/><rect x="8.7" y="0.2" width="16.6" height="8.8" fill="#d6d6d6"/><path d="M8.9 0.2v8.8M25.1 0.2v8.8" stroke="#a8a8a8" stroke-width="0.5"/><rect x="26.05" y="0.5" width="2.50" height="8.2" fill="#d8d8d8" stroke="#cf7fca" stroke-width="0.8"/><rect x="29.75" y="0.5" width="2.60" height="8.2" fill="#d8d8d8" stroke="#508cc8" stroke-width="0.8"/><path d="M14 3.2h5v3.6h-5z" fill="#e8a030"/><path d="M13.7 2.6h5.6v1.1h-5.6z" fill="#f0b850"/><path d="M14.6 2.2h3.8v0.6h-3.8z" fill="#c88020"/></g>
<text transform="translate(1163.6 480.8) scale(0.9 1)" font-size="5.9" fill="#aaa2e6" stroke="#aaa2e6" stroke-width="0.15">lineMaker2_13</text>
<g transform="translate(1159.82 493.55)"><rect x="0.5" y="-2" width="7.4" height="1.5" fill="#8a8a8a"/><rect x="8.9" y="-2" width="7.0" height="1.5" fill="#8a8a8a"/><rect x="17.8" y="-2" width="7.0" height="1.5" fill="#8a8a8a"/><rect x="26.2" y="-2" width="6.6" height="1.5" fill="#8a8a8a"/><rect x="13.1" y="9.5" width="7" height="1.5" fill="#8a8a8a"/><rect x="0" y="0" width="32.8" height="9.2" fill="#bdbdbd"/><rect x="0.45" y="0.5" width="3.30" height="8.2" fill="#d8d8d8" stroke="#cfc750" stroke-width="0.8"/><rect x="4.85" y="0.5" width="3.10" height="8.2" fill="#d8d8d8" stroke="#c4694a" stroke-width="0.8"/><rect x="8.7" y="0.2" width="16.6" height="8.8" fill="#d6d6d6"/><path d="M8.9 0.2v8.8M25.1 0.2v8.8" stroke="#a8a8a8" stroke-width="0.5"/><rect x="26.05" y="0.5" width="2.50" height="8.2" fill="#d8d8d8" stroke="#cf7fca" stroke-width="0.8"/><rect x="29.75" y="0.5" width="2.60" height="8.2" fill="#d8d8d8" stroke="#508cc8" stroke-width="0.8"/><path d="M14 3.2h5v3.6h-5z" fill="#e8a030"/><path d="M13.7 2.6h5.6v1.1h-5.6z" fill="#f0b850"/><path d="M14.6 2.2h3.8v0.6h-3.8z" fill="#c88020"/></g>
<text transform="translate(1195.0 500.7) scale(0.9 1)" font-size="5.9" fill="#aaa2e6" stroke="#aaa2e6" stroke-width="0.15">lineMaker2_14</text>
<g transform="translate(1016.00 180.40)"><rect x="13" y="-2" width="7" height="1.5" fill="#8a8a8a"/><rect x="13.1" y="9.5" width="7" height="1.5" fill="#8a8a8a"/><rect x="0" y="0" width="32.8" height="9.2" fill="#bdbdbd"/><rect x="0.45" y="0.5" width="3.30" height="8.2" fill="#d8d8d8" stroke="#cfc750" stroke-width="0.8"/><rect x="4.85" y="0.5" width="3.10" height="8.2" fill="#d8d8d8" stroke="#c4694a" stroke-width="0.8"/><rect x="8.7" y="0.2" width="16.6" height="8.8" fill="#d6d6d6"/><path d="M8.9 0.2v8.8M25.1 0.2v8.8" stroke="#a8a8a8" stroke-width="0.5"/><rect x="26.05" y="0.5" width="2.50" height="8.2" fill="#d8d8d8" stroke="#cf7fca" stroke-width="0.8"/><rect x="29.75" y="0.5" width="2.60" height="8.2" fill="#d8d8d8" stroke="#508cc8" stroke-width="0.8"/><path d="M14.2 3.2l1.5-1 1 .8 1.6-.9.6 1.6-1 1 .4 1.4-1.8.4-1.2-.7-1.3.3z" fill="#2f6fc0"/></g>
<text x="1050.5" y="187.6" font-size="5.8" fill="#c8c8c8">offset_for_lines</text>
<g transform="translate(1114.00 156.00)"><rect x="13" y="-2" width="7" height="1.5" fill="#8a8a8a"/><rect x="13.1" y="9.5" width="7" height="1.5" fill="#8a8a8a"/><rect x="0" y="0" width="32.8" height="9.2" fill="#bdbdbd"/><rect x="0.45" y="0.5" width="3.30" height="8.2" fill="#d8d8d8" stroke="#cfc750" stroke-width="0.8"/><rect x="4.85" y="0.5" width="3.10" height="8.2" fill="#d8d8d8" stroke="#c4694a" stroke-width="0.8"/><rect x="8.7" y="0.2" width="16.6" height="8.8" fill="#d6d6d6"/><path d="M8.9 0.2v8.8M25.1 0.2v8.8" stroke="#a8a8a8" stroke-width="0.5"/><rect x="26.05" y="0.5" width="2.50" height="8.2" fill="#d8d8d8" stroke="#cf7fca" stroke-width="0.8"/><rect x="29.75" y="0.5" width="2.60" height="8.2" fill="#d8d8d8" stroke="#508cc8" stroke-width="0.8"/><circle cx="16.4" cy="4.6" r="2.3" fill="#f4f4f4" stroke="#aaa" stroke-width="0.6"/></g>
<text x="1149" y="163" font-size="5.8" fill="#c8c8c8">lineCtrl</text>
<rect x="1110" y="179" width="32.5" height="8.7" fill="#cfcfcf" stroke="#8a8a8a" stroke-width="0.5"/><circle cx="1126.2" cy="183.4" r="2.6" fill="#2e8a2e" stroke="#555" stroke-width="0.6"/>
<text x="1110.8" y="177.4" font-size="5.8" fill="#c8c8c8">lineCHOP</text>
<rect x="1057.5" y="135.8" width="9.5" height="9.5" fill="#4a4a4a" stroke="#3a3a3a" stroke-width="0.6"/><rect x="1058.7" y="146.4" width="7" height="1.4" fill="#8a8a8a"/>
<rect x="1086.8" y="133.0" width="9.5" height="9.5" fill="#4a4a4a" stroke="#3a3a3a" stroke-width="0.6"/><rect x="1088.0" y="143.6" width="7" height="1.4" fill="#8a8a8a"/>
<rect x="1116.0" y="130.0" width="9.5" height="9.5" fill="#4a4a4a" stroke="#3a3a3a" stroke-width="0.6"/><rect x="1117.2" y="140.6" width="7" height="1.4" fill="#8a8a8a"/>
<rect x="1028" y="138.8" width="9.5" height="9.5" fill="#555" stroke="#3a3a3a" stroke-width="0.6"/><rect x="1029.2" y="149.3" width="7" height="1.4" fill="#8a8a8a"/>
<g font-size="6" fill="#cfcfcf"><text x="1040" y="144.6">Sub-Network Input #1</text><text x="1040" y="151.8">_lines</text>
<text x="1069.5" y="141">Sub-Network Input #2</text><text x="1099" y="138.4">Sub-Network Input #3</text><text x="1128.5" y="135">Sub-Network Input #4</text></g>
<g transform="translate(979.00 552.30)"><rect x="13.1" y="9.5" width="7" height="1.5" fill="#8a8a8a"/><rect x="0" y="0" width="32.8" height="9.2" fill="#bdbdbd"/><rect x="0.45" y="0.5" width="3.30" height="8.2" fill="#d8d8d8" stroke="#cfc750" stroke-width="0.8"/><rect x="4.85" y="0.5" width="3.10" height="8.2" fill="#d8d8d8" stroke="#c4694a" stroke-width="0.8"/><rect x="8.7" y="0.2" width="16.6" height="8.8" fill="#d6d6d6"/><path d="M8.9 0.2v8.8M25.1 0.2v8.8" stroke="#a8a8a8" stroke-width="0.5"/><rect x="26.05" y="0.5" width="2.50" height="8.2" fill="#d8d8d8" stroke="#cf7fca" stroke-width="0.8"/><rect x="29.75" y="0.5" width="2.60" height="8.2" fill="#d8d8d8" stroke="#508cc8" stroke-width="0.8"/><path d="M15.2 2.3l3 2.3-3 2.3z" fill="#b02828"/><circle cx="17.2" cy="4.6" r="0.9" fill="#eee"/></g>
<rect x="992.1" y="550.3" width="7" height="1.5" fill="#8a8a8a"/>
<text x="1013.5" y="559.3" font-size="5.8" fill="#c8c8c8">merge1</text>
<path d="M976.9 584.5H990.6V583.2H1000V584.5H1013.2V596.8H1000V598.9H990.6V596.8H976.9Z" fill="#2a3ac8" stroke="#f0ee10" stroke-width="1.3" stroke-linejoin="round"/>
<g transform="translate(979.00 586.60)"><rect x="0" y="0" width="32.8" height="9.2" fill="#bdbdbd"/><rect x="0.45" y="0.5" width="3.30" height="8.2" fill="#d8d8d8" stroke="#cfc750" stroke-width="0.8"/><rect x="4.85" y="0.5" width="3.10" height="8.2" fill="#d8d8d8" stroke="#c4694a" stroke-width="0.8"/><rect x="8.7" y="0.2" width="16.6" height="8.8" fill="#d6d6d6"/><path d="M8.9 0.2v8.8M25.1 0.2v8.8" stroke="#a8a8a8" stroke-width="0.5"/><rect x="26.05" y="0.5" width="2.50" height="8.2" fill="#d8d8d8" stroke="#cf7fca" stroke-width="0.8"/><rect x="29.75" y="0.5" width="2.60" height="8.2" fill="#d8d8d8" stroke="#508cc8" stroke-width="0.8"/><circle cx="16.4" cy="4.6" r="2.3" fill="#f4f4f4" stroke="#aaa" stroke-width="0.6"/></g>
<rect x="1008.2" y="587" width="3.6" height="8.4" fill="#22b2f2"/>
<text x="1015" y="594" font-size="5.8" fill="#d0d0d0">_out</text>
</g></svg>
<div class="a" style="left:0.0px;top:663.7px;width:1280.0px;height:22.3px;background:#3b3b3b;border-top:0.6px solid #505050;"></div>
<div class="a" style="left:4.4px;top:664.4px;width:1275.6px;height:20.6px;background:#3b3b3b;border:0.5px solid #1c1c1c;"></div>
<div class="a" style="left:10.2px;top:670.0px;width:12.6px;height:11.4px;background:#4e4e4e;border:0.6px solid #2a2a2a;"></div>
<div class="a" style="left:23.8px;top:670.0px;width:12.6px;height:11.4px;background:#4e4e4e;border:0.6px solid #2a2a2a;"></div>
<div class="a" style="left:37.4px;top:670.0px;width:12.6px;height:11.4px;background:#4e4e4e;border:0.6px solid #2a2a2a;"></div>
<div class="a" style="left:51.0px;top:669.6px;width:12.6px;height:12.0px;background:#e0a028;border:0.6px solid #f0c050;"></div>
<div class="a" style="left:64.6px;top:670.0px;width:12.6px;height:11.4px;background:#4e4e4e;border:0.6px solid #2a2a2a;"></div>
<div class="a" style="left:78.2px;top:670.0px;width:12.6px;height:11.4px;background:#4e4e4e;border:0.6px solid #2a2a2a;"></div>
<svg width="1280" height="720"><g fill="#f0f0f0">
<rect x="12.6" y="672.6" width="1.2" height="6"/><path d="M17.8 672.6v6l-3.6-3zM21.4 672.6v6l-3.6-3z"/>
<rect x="26.6" y="672.6" width="1.4" height="6" fill="#40d040"/><path d="M33 672.6v6l-4.4-3z"/>
<path d="M46 672.2v6.8l-5.2-3.4z"/>
<rect x="54.4" y="672.6" width="5.8" height="5.8" fill="#d8d8d8"/>
<path d="M68.6 672.2v6.8l5.2-3.4z"/>
<path d="M81 672.6v6l4.4-3z"/><rect x="86" y="672.6" width="1.4" height="6" fill="#40d040"/>
</g></svg>
<div class="a" style="left:97.0px;top:671.0px;width:25.0px;height:10.4px;background:#151515;border:0.5px solid #0a0a0a;"></div>
<div class="t" style="left:98.6px;top:673.06px;font-size:6.4px;color:#e8e8e8;transform:scaleX(0.920);transform-origin:0 0;-webkit-text-stroke:0.22px #e8e8e8;">419</div>
<div class="a" style="left:121.6px;top:671.0px;width:8.4px;height:10.4px;background:#4a4a4a;border:0.5px solid #2a2a2a;"></div>
<div class="a" style="left:130.0px;top:671.0px;width:8.6px;height:10.4px;background:#4a4a4a;border:0.5px solid #2a2a2a;"></div>
<svg width="1280" height="720"><path d="M123.6 676.2h4.4" stroke="#777" stroke-width="0.9"/><circle cx="134.3" cy="676.2" r="2" fill="none" stroke="#aaa" stroke-width="0.7"/><path d="M134.3 672.8v6.8M131 676.2h6.6" stroke="#aaa" stroke-width="0.5"/></svg>
<div class="a" style="left:143.0px;top:671.0px;width:22.0px;height:10.4px;background:#151515;border:0.5px solid #0a0a0a;"></div>
<div class="t" style="left:145.0px;top:673.06px;font-size:6.4px;color:#e8e8e8;transform:scaleX(0.920);transform-origin:0 0;-webkit-text-stroke:0.22px #e8e8e8;">1</div>
<div class="a" style="left:166.4px;top:665.4px;width:1024.6px;height:19.0px;background:#2e2e2e;border:0.6px solid #1c1c1c;"></div>
<svg width="1280" height="720">
<path d="M167 674h1023" stroke="#b4b4b4" stroke-width="0.8"/>
<path d="M171.74 672.5v3.1M177.31 672.5v3.1M182.89 672.5v3.1M188.46 672.5v3.1M194.03 672.5v3.1M199.60 672.5v3.1M205.17 672.5v3.1M210.74 672.5v3.1M216.32 672.5v3.1M221.89 672.5v3.1M227.46 672.5v3.1M233.03 672.5v3.1M238.60 672.5v3.1M244.17 672.5v3.1M249.75 672.5v3.1M255.32 672.5v3.1M260.89 672.5v3.1M266.46 672.5v3.1M272.03 672.5v3.1M277.60 670.2v6.2M283.18 672.5v3.1M288.75 672.5v3.1M294.32 672.5v3.1M299.89 672.5v3.1M305.46 672.5v3.1M311.03 672.5v3.1M316.60 672.5v3.1M322.18 672.5v3.1M327.75 672.5v3.1M333.32 672.5v3.1M338.89 672.5v3.1M344.46 672.5v3.1M350.03 672.5v3.1M355.61 672.5v3.1M361.18 672.5v3.1M366.75 672.5v3.1M372.32 672.5v3.1M377.89 672.5v3.1M383.46 672.5v3.1M389.04 670.2v6.2M394.61 672.5v3.1M400.18 672.5v3.1M405.75 672.5v3.1M411.32 672.5v3.1M416.89 672.5v3.1M422.46 672.5v3.1M428.04 672.5v3.1M433.61 672.5v3.1M439.18 672.5v3.1M444.75 672.5v3.1M450.32 672.5v3.1M455.89 672.5v3.1M461.47 672.5v3.1M467.04 672.5v3.1M472.61 672.5v3.1M478.18 672.5v3.1M483.75 672.5v3.1M489.32 672.5v3.1M494.90 672.5v3.1M500.47 670.2v6.2M506.04 672.5v3.1M511.61 672.5v3.1M517.18 672.5v3.1M522.75 672.5v3.1M528.33 672.5v3.1M533.90 672.5v3.1M539.47 672.5v3.1M545.04 672.5v3.1M550.61 672.5v3.1M556.18 672.5v3.1M561.75 672.5v3.1M567.33 672.5v3.1M572.90 672.5v3.1M578.47 672.5v3.1M584.04 672.5v3.1M589.61 672.5v3.1M595.18 672.5v3.1M600.76 672.5v3.1M606.33 672.5v3.1M611.90 670.2v6.2M617.47 672.5v3.1M623.04 672.5v3.1M628.61 672.5v3.1M634.19 672.5v3.1M639.76 672.5v3.1M645.33 672.5v3.1M650.90 672.5v3.1M656.47 672.5v3.1M662.04 672.5v3.1M667.62 672.5v3.1M673.19 672.5v3.1M678.76 672.5v3.1M684.33 672.5v3.1M689.90 672.5v3.1M695.47 672.5v3.1M701.04 672.5v3.1M706.62 672.5v3.1M712.19 672.5v3.1M717.76 672.5v3.1M723.33 670.2v6.2M728.90 672.5v3.1M734.47 672.5v3.1M740.05 672.5v3.1M745.62 672.5v3.1M751.19 672.5v3.1M756.76 672.5v3.1M762.33 672.5v3.1M767.90 672.5v3.1M773.48 672.5v3.1M779.05 672.5v3.1M784.62 672.5v3.1M790.19 672.5v3.1M795.76 672.5v3.1M801.33 672.5v3.1M806.91 672.5v3.1M812.48 672.5v3.1M818.05 672.5v3.1M823.62 672.5v3.1M829.19 672.5v3.1M834.76 670.2v6.2M840.34 672.5v3.1M845.91 672.5v3.1M851.48 672.5v3.1M857.05 672.5v3.1M862.62 672.5v3.1M868.19 672.5v3.1M873.76 672.5v3.1M879.34 672.5v3.1M884.91 672.5v3.1M890.48 672.5v3.1M896.05 672.5v3.1M901.62 672.5v3.1M907.19 672.5v3.1M912.77 672.5v3.1M918.34 672.5v3.1M923.91 672.5v3.1M929.48 672.5v3.1M935.05 672.5v3.1M940.62 672.5v3.1M946.20 670.2v6.2M951.77 672.5v3.1M957.34 672.5v3.1M962.91 672.5v3.1M968.48 672.5v3.1M974.05 672.5v3.1M979.62 672.5v3.1M985.20 672.5v3.1M990.77 672.5v3.1M996.34 672.5v3.1M1001.91 672.5v3.1M1007.48 672.5v3.1M1013.05 672.5v3.1M1018.63 672.5v3.1M1024.20 672.5v3.1M1029.77 672.5v3.1M1035.34 672.5v3.1M1040.91 672.5v3.1M1046.48 672.5v3.1M1052.06 672.5v3.1M1057.63 670.2v6.2M1063.20 672.5v3.1M1068.77 672.5v3.1M1074.34 672.5v3.1M1079.91 672.5v3.1M1085.49 672.5v3.1M1091.06 672.5v3.1M1096.63 672.5v3.1M1102.20 672.5v3.1M1107.77 672.5v3.1M1113.34 672.5v3.1M1118.91 672.5v3.1M1124.49 672.5v3.1M1130.06 672.5v3.1M1135.63 672.5v3.1M1141.20 672.5v3.1M1146.77 672.5v3.1M1152.34 672.5v3.1M1157.92 672.5v3.1M1163.49 672.5v3.1M1169.06 670.2v6.2M1174.63 672.5v3.1M1180.20 672.5v3.1M1185.77 672.5v3.1M167.40 666.4v9" stroke="#cdcdcd" stroke-width="0.8"/>
<text transform="translate(168.1 671.2) scale(0.92 1)" font-size="5.4" fill="#e4e4e4" font-family="Liberation Sans">1</text>
<text transform="translate(278.6 671.2) scale(0.92 1)" font-size="5.4" fill="#e4e4e4" font-family="Liberation Sans">120</text>
<text transform="translate(390.0 671.2) scale(0.92 1)" font-size="5.4" fill="#e4e4e4" font-family="Liberation Sans">240</text>
<text transform="translate(501.5 671.2) scale(0.92 1)" font-size="5.4" fill="#e4e4e4" font-family="Liberation Sans">360</text>
<text transform="translate(612.9 671.2) scale(0.92 1)" font-size="5.4" fill="#e4e4e4" font-family="Liberation Sans">480</text>
<text transform="translate(724.3 671.2) scale(0.92 1)" font-size="5.4" fill="#e4e4e4" font-family="Liberation Sans">600</text>
<text transform="translate(835.8 671.2) scale(0.92 1)" font-size="5.4" fill="#e4e4e4" font-family="Liberation Sans">720</text>
<text transform="translate(947.2 671.2) scale(0.92 1)" font-size="5.4" fill="#e4e4e4" font-family="Liberation Sans">840</text>
<text transform="translate(1058.6 671.2) scale(0.92 1)" font-size="5.4" fill="#e4e4e4" font-family="Liberation Sans">960</text>
<text transform="translate(1170.1 671.2) scale(0.92 1)" font-size="5.4" fill="#e4e4e4" font-family="Liberation Sans">1080</text>
<rect x="547.5" y="666.6" width="15.6" height="8.6" fill="#101010" stroke="#f0f0f0" stroke-width="0.9"/>
<text x="550.3" y="673.4" font-size="6" fill="#f4f4f4" font-family="Liberation Sans">419</text>
<path d="M555.3 675.4v3.4" stroke="#111" stroke-width="1.2"/>
<rect x="167" y="680.6" width="1023.6" height="3.6" fill="#3a3a3a"/><rect x="168" y="681" width="553" height="3" fill="#505050" stroke="#626262" stroke-width="0.4"/><rect x="168.6" y="681.2" width="5" height="2.4" fill="#3a3a3a" stroke="#777" stroke-width="0.4"/><rect x="721" y="681.2" width="5" height="2.4" fill="#3a3a3a" stroke="#777" stroke-width="0.4"/><path d="M446 682.5h4" stroke="#888" stroke-width="0.8"/>
</svg>
<div class="a" style="left:1192.4px;top:671.4px;width:20.4px;height:9.4px;background:#151515;border:0.5px solid #0a0a0a;"></div>
<div class="t" style="left:1194.0px;top:673.06px;font-size:6.4px;color:#e8e8e8;transform:scaleX(0.920);transform-origin:0 0;-webkit-text-stroke:0.22px #e8e8e8;">1100</div>
<div class="a" style="left:1218.6px;top:670.6px;width:10.4px;height:10.8px;background:#4c4c4c;border:0.5px solid #2a2a2a;"></div>
<div class="a" style="left:1233.0px;top:670.6px;width:10.4px;height:10.8px;background:#e0a028;border:0.5px solid #2a2a2a;"></div>
<div class="a" style="left:1243.6px;top:670.6px;width:10.4px;height:10.8px;background:#4c4c4c;border:0.5px solid #2a2a2a;"></div>
<div class="a" style="left:1254.2px;top:670.6px;width:10.4px;height:10.8px;background:#4c4c4c;border:0.5px solid #2a2a2a;"></div>
<div class="a" style="left:1264.8px;top:670.6px;width:10.4px;height:10.8px;background:#4c4c4c;border:0.5px solid #2a2a2a;"></div>
<svg width="1280" height="720"><circle cx="1224.6" cy="674.6" r="1.5" fill="none" stroke="#e8e8e8" stroke-width="0.7"/><rect x="1221" y="676.4" width="6.4" height="3" fill="none" stroke="#e8e8e8" stroke-width="0.7"/><circle cx="1238.2" cy="676" r="2.6" fill="#d8e0f0" stroke="#3a5aa0" stroke-width="0.8"/><circle cx="1238.2" cy="676" r="0.9" fill="#3a5aa0"/><rect x="1245.6" y="673" width="6" height="5.4" fill="#9a9a9a"/><circle cx="1250" cy="676.6" r="1.6" fill="#ddd"/><path d="M1257 673v6M1259 676l2.2-2.4v4.8z" stroke="#ddd" stroke-width="0.7" fill="#ddd"/><rect x="1267.4" y="672.8" width="4.6" height="5" fill="#e8e8e8"/><rect x="1270.2" y="676.2" width="3" height="3" fill="#bbb" stroke="#333" stroke-width="0.4"/></svg>
<div class="a" style="left:0.0px;top:686.0px;width:1280.0px;height:14.2px;background:#1d1d1d;border-top:0.6px solid #111;"></div>
<div class="t" style="left:1.6px;top:690.87px;font-size:6.6px;color:#cacaca;transform:scaleX(0.953);transform-origin:0 0;-webkit-text-stroke:0.22px #cacaca;">Left mouse tumbles.&nbsp; Middle pans.&nbsp; Right dollies.&nbsp; Ctrl+Left rolls.&nbsp; Alt+Left rotates.&nbsp; Ctrl+Right box-zooms.&nbsp; Alt+Right zooms.</div>
<div class="a" style="left:1167.6px;top:687.4px;width:112.4px;height:11.8px;background:#3a3a3a;border:0.5px solid #222;"></div>
<div class="a" style="left:1203.6px;top:687.8px;width:63.0px;height:11.0px;background:#4a4a4a;border:0.5px solid #2a2a2a;"></div>
<div class="t" style="left:1209.6px;top:690.26px;font-size:6.2px;color:#d8d8d8;transform:scaleX(0.900);transform-origin:0 0;-webkit-text-stroke:0.22px #d8d8d8;">Auto Update</div>
<svg width="1280" height="720"><circle cx="1173.6" cy="693.2" r="3.4" fill="#c03030"/><path d="M1172.2 691.8l2.8 2.8M1175 691.8l-2.8 2.8" stroke="#e8a0a0" stroke-width="0.8"/><ellipse cx="1185.6" cy="693" rx="4.4" ry="3.2" fill="#d0d0d0"/><path d="M1189 696.6h2l-1 1.2z" fill="#bbb"/><rect x="1193.4" y="689.4" width="8" height="7.6" rx="1.4" fill="none" stroke="#9a9a9a" stroke-width="0.8"/><circle cx="1197.4" cy="693.2" r="1.8" fill="none" stroke="#9a9a9a" stroke-width="0.7"/><path d="M1258.4 692h2.6l-1.3-1.8zM1258.4 694.2h2.6l-1.3 1.8z" fill="#c0c0c0"/><path d="M1269.6 690.4h8v2h-8z" fill="#e8e8e8"/><path d="M1270.4 692.6h6.4l1 4.4h-8.4z" fill="#d0d0d0"/><circle cx="1273.6" cy="694.6" r="1.3" fill="#555"/></svg>
<div class="a" style="left:0.0px;top:700.2px;width:1280.0px;height:19.8px;background:linear-gradient(#1c2430 0%,#0b1018 12%,#070a10 100%);border-top:0.6px solid #47505c;"></div>
<div class="a" style="left:30.2px;top:701.2px;width:28.6px;height:18.6px;background:linear-gradient(rgba(200,210,225,0.42),rgba(120,130,150,0.25) 45%,rgba(40,48,60,0.35) 55%,rgba(90,100,120,0.3));border:0.6px solid rgba(190,200,215,0.6);border-radius:1.5px;"></div>
<div class="a" style="left:60.8px;top:701.2px;width:29.2px;height:18.6px;background:linear-gradient(rgba(200,210,225,0.42),rgba(120,130,150,0.25) 45%,rgba(40,48,60,0.35) 55%,rgba(90,100,120,0.3));border:0.6px solid rgba(190,200,215,0.6);border-radius:1.5px;"></div>
<div class="a" style="left:340.4px;top:701.2px;width:28.4px;height:18.6px;background:linear-gradient(rgba(200,210,225,0.42),rgba(120,130,150,0.25) 45%,rgba(40,48,60,0.35) 55%,rgba(90,100,120,0.3));border:0.6px solid rgba(190,200,215,0.6);border-radius:1.5px;"></div>
<svg width="1280" height="720" font-family="Liberation Sans, sans-serif">
<defs><radialGradient id="orb" cx="0.5" cy="0.35" r="0.7"><stop offset="0" stop-color="#9fd0f8"/><stop offset="0.55" stop-color="#2f78c8"/><stop offset="1" stop-color="#123a78"/></radialGradient></defs>
<circle cx="13.8" cy="710.2" r="9.2" fill="url(#orb)" stroke="#0c2850" stroke-width="0.6"/>
<path d="M9.6 706.6q2-1 3.6-.2l-.8 3.2q-1.6-.8-3.6.2z" fill="#e85020"/><path d="M14 706.6q2 .8 3.8-.2l-.8 3.2q-1.8 1-3.8.2z" fill="#78c020"/><path d="M8.6 710.6q2-1 3.6-.2l-.8 3.2q-1.6-.8-3.6.2z" fill="#3090e8"/><path d="M13 710.6q2 .8 3.8-.2l-.8 3.2q-1.8 1-3.8.2z" fill="#f0c020"/>
<path d="M37 703.4h6l1.4 1.6h8.4v11h-15.8z" fill="#f4dc82"/><path d="M37 707h15.8v8.8h-15.8z" fill="#fbeaa4"/><rect x="39.6" y="710.2" width="10.6" height="5.4" fill="#6ab0e8"/><rect x="41.4" y="712.4" width="7" height="1" fill="#e8f4ff"/><rect x="40" y="704.8" width="2" height="1.4" fill="#e04030"/><rect x="43" y="704.8" width="2" height="1.4" fill="#40a040"/>
<rect x="66.2" y="702.6" width="16.2" height="15" fill="#e8521a"/><rect x="82.4" y="702.6" width="5" height="15" fill="#3a3a3a"/><path d="M74.8 710.8m-1.4 0a1.4 1.4 0 1 0 2.8 0a3 3 0 1 0 -6 0a4.6 4.6 0 1 0 9.2 0" fill="none" stroke="#1a1a1a" stroke-width="1.5"/>
<circle cx="106.2" cy="709.6" r="7.3" fill="#101010" stroke="#f0c020" stroke-width="1.3"/><path d="M106.2 709.6L99.6 706.4M106.2 709.6L112.8 706.4M106.2 709.6V716.8" stroke="#f0c020" stroke-width="0.9"/><path d="M101 704.4a7.3 7.3 0 0 1 10.4 0l-5.2 5.2z" fill="#f0c020" opacity="0.55"/><path d="M112.9 711a7.3 7.3 0 0 1-5.4 5.6l-1.3-7z" fill="#f0c020" opacity="0.3"/><circle cx="106.2" cy="709.6" r="1.6" fill="#101010" stroke="#f0c020" stroke-width="0.6"/>
<rect x="130.8" y="702.6" width="12.4" height="12.6" fill="#1e0a3c" stroke="#c79cf0" stroke-width="1.3"/><text x="137.0" y="711.9" font-size="7.6" font-weight="bold" fill="#d8b8ff" text-anchor="middle">Ae</text>
<rect x="161.8" y="702.6" width="12.4" height="12.6" fill="#2a1c00" stroke="#f0b020" stroke-width="1.3"/><text x="168.0" y="711.9" font-size="7.6" font-weight="bold" fill="#f8c030" text-anchor="middle">Br</text>
<rect x="192.6" y="702.6" width="12.4" height="12.6" fill="#0a1c3c" stroke="#6cb0f4" stroke-width="1.3"/><text x="198.8" y="711.9" font-size="7.6" font-weight="bold" fill="#8cc8ff" text-anchor="middle">Ps</text>
<rect x="223.8" y="702.6" width="12.4" height="12.6" fill="#2c1600" stroke="#f09a20" stroke-width="1.3"/><text x="230.0" y="711.9" font-size="7.6" font-weight="bold" fill="#f8a830" text-anchor="middle">Ai</text>
<rect x="255.0" y="702.6" width="12.4" height="12.6" fill="#280a38" stroke="#d878f0" stroke-width="1.3"/><text x="261.2" y="711.9" font-size="7.6" font-weight="bold" fill="#e498f8" text-anchor="middle">Pr</text>
<path d="M284.6 704.6q2-1.4 4 0.6M298.6 704.6q-2-1.4-4 0.6" stroke="#e8e8e8" stroke-width="1.1" fill="none"/><path d="M288 704.4h7l0.6 3.6-2 4.6h-4.2l-2-4.6z" fill="#dcdcdc"/><circle cx="290" cy="707.4" r="0.9" fill="#333"/><circle cx="293.2" cy="707.4" r="0.9" fill="#333"/><text x="291.4" y="718.6" font-size="6.2" font-weight="bold" fill="#f0f0f0" text-anchor="middle">UV</text>
<g transform="translate(0 -1.3)">
<rect x="316.6" y="703.6" width="16" height="14" fill="#3a6a9a"/><path d="M316.6 713.6h16v4h-16z" fill="#e89a20"/><text x="324.6" y="713.4" font-size="7.6" font-weight="bold" fill="#f4f4f4" text-anchor="middle">RF</text>
<ellipse cx="354.6" cy="710.6" rx="7" ry="7.4" fill="#2838e0"/><text x="354.6" y="715.2" font-size="13" font-weight="bold" fill="#f02020" text-anchor="middle">S</text>
<circle cx="385.6" cy="710.4" r="5.6" fill="none" stroke="#2a98f0" stroke-width="2.6"/><path d="M387.6 712.6l3.6 4.6" stroke="#2a98f0" stroke-width="2.4"/>
<circle cx="416" cy="710.4" r="7.2" fill="#e8681a"/><circle cx="415.4" cy="708.8" r="4.4" fill="#3a6ad0"/><path d="M409 709a7 7 0 0 0 13.6 3.4q-3 3-7 1.4t-3.6-6.4z" fill="#f8a020"/>
<rect x="440" y="703.2" width="15" height="15" fill="#b8b890"/><circle cx="447.5" cy="710.7" r="3.2" fill="#f8f8f8" stroke="#333" stroke-width="1.4"/><path d="M442 705h2v2h-2zM451 705h2v2h-2zM442 714.6h2v2h-2zM451 714.6h2v2h-2z" fill="#3a3a2a"/>
<rect x="472.6" y="703" width="12" height="15.4" fill="#3a4450"/><path d="M475 716c0-6 2-10 5-11 2 1 3 4 2 7l-2-1-1 5z" fill="#d8dce0"/>
<rect x="503.6" y="703" width="12" height="15.4" fill="#2a3440"/><path d="M506 707c3-2 6-2 8 1l-2 1c2 2 2 5 0 7-1-3-3-5-6-5z" fill="#d8dce0"/>
</g>
<path d="M1191 712l1.8-2.4 1.8 2.4z" fill="#e8e8e8"/>
<path d="M1201.6 706.6v7.6" stroke="#f0f0f0" stroke-width="0.9"/><path d="M1202 706.8h5v3.6h-5z" fill="#f4f4f4"/><rect x="1205.2" y="710.4" width="3.6" height="3.6" fill="#e02020"/>
<rect x="1214.6" y="707.6" width="6" height="4.6" fill="none" stroke="#f0f0f0" stroke-width="0.9"/><path d="M1213.6 706.6v7.4M1216 714.4h4.4" stroke="#f0f0f0" stroke-width="0.8"/>
<path d="M1226 709h1.8l2.4-2v7l-2.4-2h-1.8z" fill="#f0f0f0"/><path d="M1231.6 708.2q1.4 2.2 0 4.6" stroke="#f0f0f0" stroke-width="0.7" fill="none"/>
<text x="1255.6" y="709" font-size="6.4" fill="#f4f4f4" text-anchor="middle">3:43 PM</text><text x="1255.6" y="717.8" font-size="6.4" fill="#f4f4f4" text-anchor="middle">5/31/2013</text>
<rect x="1275.4" y="700.6" width="4.6" height="19.4" fill="#1a2230" stroke="#5a6470" stroke-width="0.5"/>
</svg>
</div></body></html>
